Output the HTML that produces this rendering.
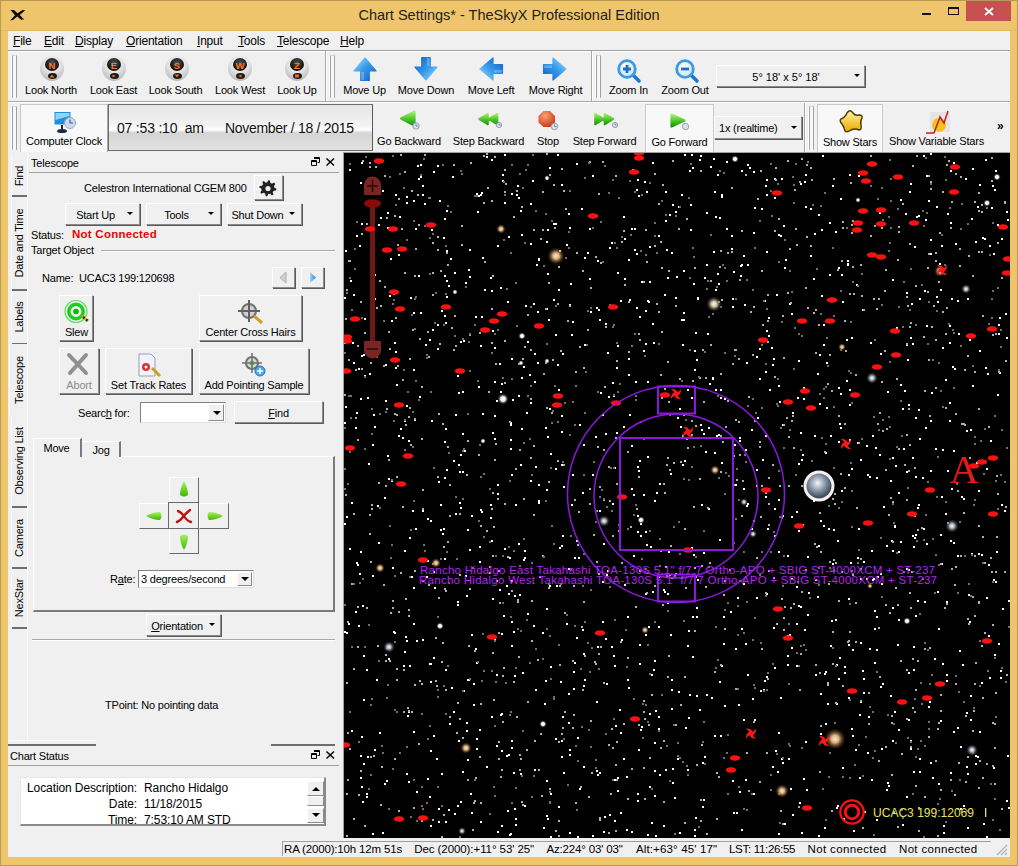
<!DOCTYPE html><html><head><meta charset="utf-8"><style>
*{margin:0;padding:0;box-sizing:border-box}
html,body{width:1018px;height:866px;overflow:hidden;background:#EFC56B;font-family:"Liberation Sans", sans-serif;}
.t{position:absolute;white-space:pre;font-family:"Liberation Sans", sans-serif;letter-spacing:-0.2px;}
.btn{position:absolute;background:#F0F0F0;border-top:1px solid #FFFFFF;border-left:1px solid #FFFFFF;border-right:1px solid #8A8A8A;border-bottom:1px solid #8A8A8A;box-shadow:1px 1px 0 #5A5A5A;}
.sunk{position:absolute;border-top:1px solid #A0A0A0;border-left:1px solid #A0A0A0;border-right:1px solid #FFF;border-bottom:1px solid #FFF;}
.grip{position:absolute;width:5px;border-left:1px solid #A0A0A0;border-right:1px solid #A0A0A0;border-top:1px solid #D8D8D8;border-radius:1px;background:#F8F8F8;}
.grip:before{content:"";position:absolute;left:-2px;top:0;bottom:0;width:1px;background:#FFF;}
.vsep{position:absolute;width:2px;border-left:1px solid #A8A8A8;border-right:1px solid #fff;}
.arr{position:absolute;width:0;height:0;border-left:3px solid transparent;border-right:3px solid transparent;border-top:3px solid #000;}
</style></head><body><div style="position:absolute;left:0;top:0;width:1018px;height:866px;border:1px solid #B89A55;"></div>
<div class="t" style="left:0px;top:7.7px;font-size:14.5px;line-height:14.5px;color:#222;font-weight:normal;width:1018px;text-align:center;letter-spacing:0;">Chart Settings* - TheSkyX Professional Edition</div>
<div style="position:absolute;left:966px;top:1px;width:45px;height:20px;background:#C75050;"></div>
<svg style="position:absolute;left:984px;top:7px" width="10" height="9"><path d="M1 1L9 8M9 1L1 8" stroke="#fff" stroke-width="1.8"/></svg>
<div style="position:absolute;left:948px;top:7px;width:11px;height:8px;border:1px solid #111;border-top-width:2px;"></div>
<div style="position:absolute;left:922px;top:13px;width:9px;height:2px;background:#111;"></div>
<svg style="position:absolute;left:0;top:0" width="30" height="30"><path d="M10.5 10L14 10L17.5 13.2L22.5 10L25.2 10.3L19.8 15L24.2 19.5L21.5 20L17.2 16.6L13 20L10.2 20.4L15 15.2Z" fill="#0A0A10"/><path d="M21.5 19.8L24 19.4L23 18.5Z" fill="#8090D0"/></svg>
<div style="position:absolute;left:1px;top:30px;width:1016px;height:1px;background:#E4B860;"></div>
<div style="position:absolute;left:8px;top:31px;width:1002px;height:826px;background:#F0F0F0;"></div>
<div style="position:absolute;left:8px;top:31px;width:1002px;height:19px;background:#F0F0F0;"></div>
<div style="position:absolute;left:8px;top:50px;width:1002px;height:1px;background:#A0A0A0;"></div>
<div style="position:absolute;left:8px;top:51px;width:1002px;height:1px;background:#FFF;"></div>
<div class="t" style="left:13px;top:34.8px;font-size:12px;line-height:12px;color:#000;font-weight:normal;"><u>F</u>ile</div>
<div class="t" style="left:44px;top:34.8px;font-size:12px;line-height:12px;color:#000;font-weight:normal;"><u>E</u>dit</div>
<div class="t" style="left:75px;top:34.8px;font-size:12px;line-height:12px;color:#000;font-weight:normal;"><u>D</u>isplay</div>
<div class="t" style="left:126px;top:34.8px;font-size:12px;line-height:12px;color:#000;font-weight:normal;"><u>O</u>rientation</div>
<div class="t" style="left:197px;top:34.8px;font-size:12px;line-height:12px;color:#000;font-weight:normal;"><u>I</u>nput</div>
<div class="t" style="left:238px;top:34.8px;font-size:12px;line-height:12px;color:#000;font-weight:normal;"><u>T</u>ools</div>
<div class="t" style="left:277px;top:34.8px;font-size:12px;line-height:12px;color:#000;font-weight:normal;"><u>T</u>elescope</div>
<div class="t" style="left:340px;top:34.8px;font-size:12px;line-height:12px;color:#000;font-weight:normal;"><u>H</u>elp</div>
<div style="position:absolute;left:8px;top:101px;width:1002px;height:1px;background:#A8A8A8;"></div>
<div style="position:absolute;left:8px;top:102px;width:1002px;height:1px;background:#FFF;"></div>
<div class="grip" style="left:12px;top:55px;height:43px"></div>
<div class="vsep" style="left:325px;top:51px;height:50px"></div>
<div class="grip" style="left:330px;top:55px;height:43px"></div>
<div class="vsep" style="left:591px;top:51px;height:50px"></div>
<div class="grip" style="left:596px;top:55px;height:43px"></div>
<div style="position:absolute;left:40px;top:56px;width:24px;height:25px;border-radius:50%;background:radial-gradient(circle at 50% 30%,#FFFFFF 0,#E0E0E0 45%,#A8A8A8 100%);"></div>
<div style="position:absolute;left:45px;top:58px;width:14px;height:13px;border-radius:50%;background:radial-gradient(circle at 50% 35%,#505050 0,#141414 65%);"></div>
<div class="t" style="left:45px;top:60.5px;font-size:9.5px;line-height:9.5px;color:#FF7A20;font-weight:bold;width:14px;text-align:center;letter-spacing:0;">N</div>
<div style="position:absolute;left:47.5px;top:73px;width:9px;height:6px;border-radius:50%;background:#181818;"></div>
<svg style="position:absolute;left:49px;top:74px" width="6" height="4"><path d="M3 0.5L5.5 3.5H0.5Z" fill="#F07020"/></svg>
<div style="position:absolute;left:102px;top:56px;width:24px;height:25px;border-radius:50%;background:radial-gradient(circle at 50% 30%,#FFFFFF 0,#E0E0E0 45%,#A8A8A8 100%);"></div>
<div style="position:absolute;left:107px;top:58px;width:14px;height:13px;border-radius:50%;background:radial-gradient(circle at 50% 35%,#505050 0,#141414 65%);"></div>
<div class="t" style="left:107px;top:60.5px;font-size:9.5px;line-height:9.5px;color:#FF7A20;font-weight:bold;width:14px;text-align:center;letter-spacing:0;">E</div>
<div style="position:absolute;left:109.5px;top:73px;width:9px;height:6px;border-radius:50%;background:#181818;"></div>
<svg style="position:absolute;left:111px;top:74px" width="6" height="4"><path d="M1.5 0.5L5 2L1.5 3.5Z" fill="#F07020"/></svg>
<div style="position:absolute;left:165px;top:56px;width:24px;height:25px;border-radius:50%;background:radial-gradient(circle at 50% 30%,#FFFFFF 0,#E0E0E0 45%,#A8A8A8 100%);"></div>
<div style="position:absolute;left:170px;top:58px;width:14px;height:13px;border-radius:50%;background:radial-gradient(circle at 50% 35%,#505050 0,#141414 65%);"></div>
<div class="t" style="left:170px;top:60.5px;font-size:9.5px;line-height:9.5px;color:#FF7A20;font-weight:bold;width:14px;text-align:center;letter-spacing:0;">S</div>
<div style="position:absolute;left:172.5px;top:73px;width:9px;height:6px;border-radius:50%;background:#181818;"></div>
<svg style="position:absolute;left:174px;top:74px" width="6" height="4"><path d="M0.5 0.5H5.5L3 3.5Z" fill="#F07020"/></svg>
<div style="position:absolute;left:228px;top:56px;width:24px;height:25px;border-radius:50%;background:radial-gradient(circle at 50% 30%,#FFFFFF 0,#E0E0E0 45%,#A8A8A8 100%);"></div>
<div style="position:absolute;left:233px;top:58px;width:14px;height:13px;border-radius:50%;background:radial-gradient(circle at 50% 35%,#505050 0,#141414 65%);"></div>
<div class="t" style="left:233px;top:60.5px;font-size:9.5px;line-height:9.5px;color:#FF7A20;font-weight:bold;width:14px;text-align:center;letter-spacing:0;">W</div>
<div style="position:absolute;left:235.5px;top:73px;width:9px;height:6px;border-radius:50%;background:#181818;"></div>
<svg style="position:absolute;left:237px;top:74px" width="6" height="4"><path d="M4.5 0.5L1 2L4.5 3.5Z" fill="#F07020"/></svg>
<div style="position:absolute;left:285px;top:56px;width:24px;height:25px;border-radius:50%;background:radial-gradient(circle at 50% 30%,#FFFFFF 0,#E0E0E0 45%,#A8A8A8 100%);"></div>
<div style="position:absolute;left:290px;top:58px;width:14px;height:13px;border-radius:50%;background:radial-gradient(circle at 50% 35%,#505050 0,#141414 65%);"></div>
<div class="t" style="left:290px;top:60.5px;font-size:9.5px;line-height:9.5px;color:#FF7A20;font-weight:bold;width:14px;text-align:center;letter-spacing:0;">Z</div>
<div style="position:absolute;left:292.5px;top:73px;width:9px;height:6px;border-radius:50%;background:#181818;"></div>
<svg style="position:absolute;left:294px;top:74px" width="6" height="4"><path d="M1 0.5H5V3.5H1Z" fill="#F07020"/></svg>
<div class="t" style="left:22px;top:84.7px;font-size:11px;line-height:11px;color:#000;font-weight:normal;width:58px;text-align:center;">Look North</div>
<div class="t" style="left:87px;top:84.7px;font-size:11px;line-height:11px;color:#000;font-weight:normal;width:53px;text-align:center;">Look East</div>
<div class="t" style="left:146px;top:84.7px;font-size:11px;line-height:11px;color:#000;font-weight:normal;width:59px;text-align:center;">Look South</div>
<div class="t" style="left:212px;top:84.7px;font-size:11px;line-height:11px;color:#000;font-weight:normal;width:56px;text-align:center;">Look West</div>
<div class="t" style="left:275px;top:84.7px;font-size:11px;line-height:11px;color:#000;font-weight:normal;width:44px;text-align:center;">Look Up</div>
<svg style="position:absolute;left:352px;top:56px;transform:rotate(0deg)" width="26" height="26" viewBox="0 0 26 26"><defs><linearGradient id="ag365" x1="0" y1="0" x2="1" y2="1"><stop offset="0" stop-color="#A0E0FF"/><stop offset="0.45" stop-color="#3A9CEC"/><stop offset="1" stop-color="#0E5EC0"/></linearGradient></defs><path d="M13 2L24 15H17.3V24.5H8.7V15H2Z" fill="url(#ag365)" stroke="url(#ag365)" stroke-width="1.2" stroke-linejoin="round"/><path d="M9.5 16H12V24H9.5Z" fill="#FFFFFF" opacity="0.25"/></svg>
<svg style="position:absolute;left:413px;top:56px;transform:rotate(180deg)" width="26" height="26" viewBox="0 0 26 26"><defs><linearGradient id="ag426" x1="0" y1="0" x2="1" y2="1"><stop offset="0" stop-color="#A0E0FF"/><stop offset="0.45" stop-color="#3A9CEC"/><stop offset="1" stop-color="#0E5EC0"/></linearGradient></defs><path d="M13 2L24 15H17.3V24.5H8.7V15H2Z" fill="url(#ag426)" stroke="url(#ag426)" stroke-width="1.2" stroke-linejoin="round"/><path d="M9.5 16H12V24H9.5Z" fill="#FFFFFF" opacity="0.25"/></svg>
<svg style="position:absolute;left:478px;top:56px;transform:rotate(-90deg)" width="26" height="26" viewBox="0 0 26 26"><defs><linearGradient id="ag491" x1="0" y1="0" x2="1" y2="1"><stop offset="0" stop-color="#A0E0FF"/><stop offset="0.45" stop-color="#3A9CEC"/><stop offset="1" stop-color="#0E5EC0"/></linearGradient></defs><path d="M13 2L24 15H17.3V24.5H8.7V15H2Z" fill="url(#ag491)" stroke="url(#ag491)" stroke-width="1.2" stroke-linejoin="round"/><path d="M9.5 16H12V24H9.5Z" fill="#FFFFFF" opacity="0.25"/></svg>
<svg style="position:absolute;left:542px;top:56px;transform:rotate(90deg)" width="26" height="26" viewBox="0 0 26 26"><defs><linearGradient id="ag555" x1="0" y1="0" x2="1" y2="1"><stop offset="0" stop-color="#A0E0FF"/><stop offset="0.45" stop-color="#3A9CEC"/><stop offset="1" stop-color="#0E5EC0"/></linearGradient></defs><path d="M13 2L24 15H17.3V24.5H8.7V15H2Z" fill="url(#ag555)" stroke="url(#ag555)" stroke-width="1.2" stroke-linejoin="round"/><path d="M9.5 16H12V24H9.5Z" fill="#FFFFFF" opacity="0.25"/></svg>
<div class="t" style="left:340px;top:84.7px;font-size:11px;line-height:11px;color:#000;font-weight:normal;width:49px;text-align:center;">Move Up</div>
<div class="t" style="left:395px;top:84.7px;font-size:11px;line-height:11px;color:#000;font-weight:normal;width:62px;text-align:center;">Move Down</div>
<div class="t" style="left:464px;top:84.7px;font-size:11px;line-height:11px;color:#000;font-weight:normal;width:54px;text-align:center;">Move Left</div>
<div class="t" style="left:525px;top:84.7px;font-size:11px;line-height:11px;color:#000;font-weight:normal;width:61px;text-align:center;">Move Right</div>
<svg style="position:absolute;left:613px;top:56px" width="30" height="28" viewBox="0 0 30 28"><defs><radialGradient id="zl627" cx="0.4" cy="0.35" r="0.7"><stop offset="0" stop-color="#FFFFFF"/><stop offset="1" stop-color="#C8E4F8"/></radialGradient></defs><path d="M19.5 18.5L26 25" stroke="#1A78D0" stroke-width="3.6" stroke-linecap="round"/><circle cx="14" cy="13" r="8.3" fill="url(#zl627)" stroke="#3A9AE8" stroke-width="2.8"/><path d="M10 13H18M14 9V17" stroke="#1A70C8" stroke-width="2.8"/></svg>
<svg style="position:absolute;left:671px;top:56px" width="30" height="28" viewBox="0 0 30 28"><defs><radialGradient id="zl685" cx="0.4" cy="0.35" r="0.7"><stop offset="0" stop-color="#FFFFFF"/><stop offset="1" stop-color="#C8E4F8"/></radialGradient></defs><path d="M19.5 18.5L26 25" stroke="#1A78D0" stroke-width="3.6" stroke-linecap="round"/><circle cx="14" cy="13" r="8.3" fill="url(#zl685)" stroke="#3A9AE8" stroke-width="2.8"/><path d="M10 13H18" stroke="#1A70C8" stroke-width="2.8"/></svg>
<div class="t" style="left:606px;top:84.7px;font-size:11px;line-height:11px;color:#000;font-weight:normal;width:45px;text-align:center;">Zoom In</div>
<div class="t" style="left:659px;top:84.7px;font-size:11px;line-height:11px;color:#000;font-weight:normal;width:52px;text-align:center;">Zoom Out</div>
<div class="btn" style="left:716px;top:65px;width:149px;height:22px;"></div>
<div class="t" style="left:716px;top:71.7px;font-size:11px;line-height:11px;color:#000;font-weight:normal;width:140px;text-align:center;letter-spacing:0;">5° 18' x 5° 18'</div>
<div class="arr" style="left:854px;top:74px"></div>
<div class="grip" style="left:12px;top:106px;height:44px"></div>
<div style="position:absolute;left:20px;top:104px;width:88px;height:48px;background:#F8F8F8;border:1px solid #C8C8C8;border-bottom:none;border-right:1px solid #A8A8A8;"></div>
<svg style="position:absolute;left:53px;top:109px" width="26" height="26" viewBox="0 0 26 26"><path d="M1.5 3L17.5 3V15.5L1.5 15.5Z" fill="#1A90E0"/><path d="M2.5 4L16.5 4V7L2.5 11Z" fill="#90D4FA"/><rect x="8" y="16" width="2" height="5" fill="#222"/><ellipse cx="9" cy="22" rx="5" ry="2" fill="#1a2a4a"/><circle cx="17" cy="14" r="5.5" fill="#D0DAE8" stroke="#98A8C0"/><path d="M17 10.5V14H20" stroke="#3060B0" fill="none" stroke-width="1.2"/></svg>
<div class="t" style="left:20px;top:135.7px;font-size:11px;line-height:11px;color:#000;font-weight:normal;width:88px;text-align:center;">Computer Clock</div>
<div style="position:absolute;left:108px;top:104px;width:265px;height:47px;background:linear-gradient(#E6E6E6 0%,#F2F2F2 45%,#FFFFFF 55%,#D4D4D4 62%,#E2E2E2 100%);border:1px solid #6E6E6E;border-right-color:#5A5A5A;"></div>
<div class="t" style="left:117px;top:121.1px;font-size:14px;line-height:14px;color:#111;font-weight:normal;">07 :53 :10  am</div>
<div class="t" style="left:225px;top:121.1px;font-size:14px;line-height:14px;color:#111;font-weight:normal;letter-spacing:-0.3px;">November / 18 / 2015</div>
<svg style="position:absolute;left:0;top:0" width="1018" height="160"><defs><linearGradient id="gmg" x1="0" y1="0" x2="0" y2="1"><stop offset="0" stop-color="#A8F070"/><stop offset="0.6" stop-color="#40C020"/><stop offset="1" stop-color="#209010"/></linearGradient><radialGradient id="gstop" cx="0.4" cy="0.3" r="0.8"><stop offset="0" stop-color="#F8A070"/><stop offset="1" stop-color="#C83010"/></radialGradient></defs><path d="M401 118.5L414.5 111.5V125.5Z" fill="url(#gmg)" stroke="url(#gmg)" stroke-width="2.2" stroke-linejoin="round"/><circle cx="416" cy="126" r="3.2" fill="#D8E0EA" stroke="#8898B0" stroke-width="0.9"/><path d="M416 124.0V126H418.2" stroke="#506080" stroke-width="0.6" fill="none"/><path d="M479 119L488 113.5V124.5Z M488.5 119L497.5 113.5V124.5Z" fill="url(#gmg)" stroke="url(#gmg)" stroke-width="1.6" stroke-linejoin="round"/><circle cx="499" cy="125" r="2.6" fill="#D8E0EA" stroke="#8898B0" stroke-width="0.9"/><path d="M499 123.60000000000001V125H500.6" stroke="#506080" stroke-width="0.6" fill="none"/><path d="M543.5 111H550L555 116V122.5L550 127H543.5L538.5 122.5V116Z" fill="url(#gstop)"/><circle cx="554.5" cy="126.5" r="3.2" fill="#D8E0EA" stroke="#8898B0" stroke-width="0.9"/><path d="M554.5 124.5V126.5H556.7" stroke="#506080" stroke-width="0.6" fill="none"/><path d="M595 113.5L604 119L595 124.5Z M604.5 113.5L613.5 119L604.5 124.5Z" fill="url(#gmg)" stroke="url(#gmg)" stroke-width="1.6" stroke-linejoin="round"/><circle cx="615" cy="125" r="2.6" fill="#D8E0EA" stroke="#8898B0" stroke-width="0.9"/><path d="M615 123.60000000000001V125H616.6" stroke="#506080" stroke-width="0.6" fill="none"/></svg>
<div style="position:absolute;left:645px;top:104px;width:69px;height:48px;background:#F8F8F8;border:1px solid #C8C8C8;border-bottom:none;"></div>
<svg style="position:absolute;left:0;top:0" width="1018" height="160"><path d="M671.5 114.5L684.5 120.5L671.5 126.5Z" fill="url(#gmg)" stroke="url(#gmg)" stroke-width="2.2" stroke-linejoin="round"/><circle cx="685.5" cy="126.5" r="3.2" fill="#D8E0EA" stroke="#8898B0" stroke-width="0.9"/></svg>
<div class="t" style="left:374px;top:135.7px;font-size:11px;line-height:11px;color:#000;font-weight:normal;width:70px;text-align:center;">Go Backward</div>
<div class="t" style="left:449px;top:135.7px;font-size:11px;line-height:11px;color:#000;font-weight:normal;width:79px;text-align:center;">Step Backward</div>
<div class="t" style="left:533px;top:135.7px;font-size:11px;line-height:11px;color:#000;font-weight:normal;width:30px;text-align:center;">Stop</div>
<div class="t" style="left:568px;top:135.7px;font-size:11px;line-height:11px;color:#000;font-weight:normal;width:73px;text-align:center;">Step Forward</div>
<div class="t" style="left:645px;top:136.7px;font-size:11px;line-height:11px;color:#000;font-weight:normal;width:69px;text-align:center;">Go Forward</div>
<div class="btn" style="left:714px;top:116px;width:88px;height:23px;"></div>
<div class="t" style="left:719px;top:122.7px;font-size:11px;line-height:11px;color:#000;font-weight:normal;">1x (realtime)</div>
<div class="arr" style="left:791px;top:126px"></div>
<div class="vsep" style="left:804px;top:103px;height:49px"></div>
<div class="grip" style="left:809px;top:106px;height:44px"></div>
<div style="position:absolute;left:817px;top:104px;width:66px;height:48px;background:#F8F8F8;border:1px solid #C8C8C8;border-bottom:none;"></div>
<svg style="position:absolute;left:838px;top:109px" width="27" height="26" viewBox="0 0 27 26"><defs><linearGradient id="gst" x1="0" y1="0" x2="0" y2="1"><stop offset="0" stop-color="#FFF4A0"/><stop offset="1" stop-color="#E8A800"/></linearGradient></defs><path d="M11 2Q13 1 15 4Q17 7 21 6Q25 6 24 9Q22 12 23 16Q24 21 21 21Q17 19 13 21Q9 24 7 22Q6 18 4 15Q1 12 3 10Q6 9 8 6Q9 3 11 2Z" fill="url(#gst)" stroke="#4A3A00" stroke-width="1.4"/></svg>
<div class="t" style="left:817px;top:136.7px;font-size:11px;line-height:11px;color:#000;font-weight:normal;width:66px;text-align:center;">Show Stars</div>
<svg style="position:absolute;left:924px;top:109px" width="28" height="26" viewBox="0 0 28 26"><rect x="6" y="3" width="20" height="20" fill="#E4E4E4"/><circle cx="15" cy="16" r="7" fill="#F8C020"/><path d="M2 24H10L16 8L20 14L24 2" stroke="#C02020" stroke-width="1.5" fill="none"/></svg>
<div class="t" style="left:889px;top:135.7px;font-size:11px;line-height:11px;color:#000;font-weight:normal;width:95px;text-align:center;">Show Variable Stars</div>
<div class="t" style="left:997px;top:119.8px;font-size:12px;line-height:12px;color:#000;font-weight:bold;">»</div>
<div style="position:absolute;left:343px;top:152px;width:667px;height:686px;background:#000;border-left:1px solid #A0A0A0;border-top:1px solid #A0A0A0;"></div>
<svg style="position:absolute;left:344px;top:153px" width="666" height="685" viewBox="0 0 666 685"><filter id="bl" x="0" y="0" width="1" height="1"><feGaussianBlur stdDeviation="0.45"/></filter><g filter="url(#bl)"><path fill="#FFFFFF" d="M276 579h2v2h-2zM626 566h2v2h-2zM194 349h2v2h-2zM469 347h2v2h-2zM522 425h2v2h-2zM167 594h2v2h-2zM101 668h2v2h-2zM337 41h2v2h-2zM568 190h2v2h-2zM308 9h2v2h-2zM160 395h2v2h-2zM563 206h2v2h-2zM122 569h2v2h-2zM343 236h2v2h-2zM166 295h2v2h-2zM471 426h2v2h-2zM188 27h2v2h-2zM180 404h2v2h-2zM332 123h2v2h-2zM543 238h2v2h-2zM548 587h2v2h-2zM69 159h2v2h-2zM650 36h2v2h-2zM454 377h2v2h-2zM459 625h2v2h-2zM504 491h2v2h-2zM456 30h2v2h-2zM640 85h2v2h-2zM502 186h2v2h-2zM377 41h2v2h-2zM164 83h2v2h-2zM313 237h2v2h-2zM205 14h2v2h-2zM349 401h2v2h-2zM41 247h2v2h-2zM152 592h2v2h-2zM583 545h2v2h-2zM419 536h2v2h-2zM167 468h2v2h-2zM326 481h2v2h-2zM326 320h2v2h-2zM305 128h2v2h-2zM497 121h2v2h-2zM337 166h2v2h-2zM655 219h2v2h-2zM125 96h2v2h-2zM230 509h2v2h-2zM457 679h2v2h-2zM376 244h2v2h-2zM335 255h2v2h-2zM434 579h2v2h-2zM528 282h2v2h-2zM206 640h2v2h-2zM407 375h2v2h-2zM574 256h2v2h-2zM5 16h2v2h-2zM596 136h2v2h-2zM522 292h2v2h-2zM162 432h2v2h-2zM100 122h2v2h-2zM235 635h2v2h-2zM276 147h2v2h-2zM323 440h2v2h-2zM305 560h2v2h-2zM376 236h2v2h-2zM348 503h2v2h-2zM327 99h2v2h-2zM125 396h2v2h-2zM1 97h2v2h-2zM586 317h2v2h-2zM602 448h2v2h-2zM323 241h2v2h-2zM512 131h2v2h-2zM201 274h2v2h-2zM261 367h2v2h-2zM45 142h2v2h-2zM147 387h2v2h-2zM430 25h2v2h-2zM503 107h2v2h-2zM76 159h2v2h-2zM350 216h2v2h-2zM554 339h2v2h-2zM339 166h2v2h-2zM135 393h2v2h-2zM150 262h2v2h-2zM258 261h2v2h-2zM410 566h2v2h-2zM413 264h2v2h-2zM536 533h2v2h-2zM180 652h2v2h-2zM150 285h2v2h-2zM218 382h2v2h-2zM225 601h2v2h-2zM178 519h2v2h-2zM596 567h2v2h-2zM104 132h2v2h-2zM60 267h2v2h-2zM102 316h2v2h-2zM71 75h2v2h-2zM159 462h2v2h-2zM480 674h2v2h-2zM420 147h2v2h-2zM365 230h2v2h-2zM14 472h2v2h-2zM489 376h2v2h-2zM437 25h2v2h-2zM174 390h2v2h-2zM430 514h2v2h-2zM399 430h2v2h-2zM417 55h2v2h-2zM99 375h2v2h-2zM558 671h2v2h-2zM530 457h2v2h-2zM134 42h2v2h-2zM580 448h2v2h-2zM325 421h2v2h-2zM434 81h2v2h-2zM585 548h2v2h-2zM275 556h2v2h-2zM346 76h2v2h-2zM461 588h2v2h-2zM470 327h2v2h-2zM416 537h2v2h-2zM248 682h2v2h-2zM662 184h2v2h-2zM478 2h2v2h-2zM477 142h2v2h-2zM628 232h2v2h-2zM100 162h2v2h-2zM125 123h2v2h-2zM215 394h2v2h-2zM202 455h2v2h-2zM163 657h2v2h-2zM127 659h2v2h-2zM248 22h2v2h-2zM370 299h2v2h-2zM94 328h2v2h-2zM16 602h2v2h-2zM140 136h2v2h-2zM198 479h2v2h-2zM656 524h2v2h-2zM320 438h2v2h-2zM111 261h2v2h-2zM137 163h2v2h-2zM86 367h2v2h-2zM167 321h2v2h-2zM74 25h2v2h-2zM466 102h2v2h-2zM203 283h2v2h-2zM30 273h2v2h-2zM641 6h2v2h-2zM525 495h2v2h-2zM104 656h2v2h-2zM353 426h2v2h-2zM19 201h2v2h-2zM340 307h2v2h-2zM186 50h2v2h-2zM403 11h2v2h-2zM290 75h2v2h-2zM1 253h2v2h-2zM75 243h2v2h-2zM475 201h2v2h-2zM212 432h2v2h-2zM475 250h2v2h-2zM375 528h2v2h-2zM613 402h2v2h-2zM645 92h2v2h-2zM339 117h2v2h-2zM283 526h2v2h-2zM267 89h2v2h-2zM263 417h2v2h-2zM546 542h2v2h-2zM295 163h2v2h-2zM605 172h2v2h-2zM373 120h2v2h-2zM362 59h2v2h-2zM649 614h2v2h-2zM508 496h2v2h-2zM310 617h2v2h-2zM548 304h2v2h-2zM129 551h2v2h-2zM526 189h2v2h-2zM302 391h2v2h-2zM314 473h2v2h-2zM261 485h2v2h-2zM8 189h2v2h-2zM447 425h2v2h-2zM482 209h2v2h-2zM273 624h2v2h-2zM642 683h2v2h-2zM353 145h2v2h-2zM118 318h2v2h-2zM568 382h2v2h-2zM564 519h2v2h-2zM214 236h2v2h-2zM153 331h2v2h-2zM436 544h2v2h-2zM51 198h2v2h-2zM167 492h2v2h-2zM586 609h2v2h-2zM48 414h2v2h-2zM268 350h2v2h-2zM225 679h2v2h-2zM371 152h2v2h-2zM166 286h2v2h-2zM150 228h2v2h-2zM16 29h2v2h-2zM421 282h2v2h-2zM76 11h2v2h-2zM156 561h2v2h-2zM206 683h2v2h-2zM452 470h2v2h-2zM327 555h2v2h-2zM153 340h2v2h-2zM430 44h2v2h-2zM303 681h2v2h-2zM516 425h2v2h-2zM7 577h2v2h-2zM323 124h2v2h-2zM189 150h2v2h-2zM142 3h2v2h-2zM289 402h2v2h-2zM219 619h2v2h-2zM301 157h2v2h-2zM346 51h2v2h-2zM460 332h2v2h-2zM566 595h2v2h-2zM491 78h2v2h-2zM498 148h2v2h-2zM422 41h2v2h-2zM118 280h2v2h-2zM608 213h2v2h-2zM202 336h2v2h-2zM267 493h2v2h-2zM480 520h2v2h-2zM452 433h2v2h-2zM234 404h2v2h-2zM279 605h2v2h-2zM76 23h2v2h-2zM611 90h2v2h-2zM400 151h2v2h-2zM603 317h2v2h-2zM114 239h2v2h-2zM573 447h2v2h-2zM435 248h2v2h-2zM292 154h2v2h-2zM443 502h2v2h-2zM459 245h2v2h-2zM114 587h2v2h-2zM532 324h2v2h-2zM119 537h2v2h-2zM584 553h2v2h-2zM364 274h2v2h-2zM12 82h2v2h-2zM269 502h2v2h-2zM532 496h2v2h-2zM263 199h2v2h-2zM135 408h2v2h-2zM240 104h2v2h-2zM321 413h2v2h-2zM662 647h2v2h-2zM214 653h2v2h-2zM193 209h2v2h-2zM628 15h2v2h-2zM83 625h2v2h-2zM360 603h2v2h-2zM644 411h2v2h-2zM153 678h2v2h-2zM642 315h2v2h-2zM140 176h2v2h-2zM292 100h2v2h-2zM109 307h2v2h-2zM295 307h2v2h-2zM338 311h2v2h-2zM410 54h2v2h-2zM504 321h2v2h-2zM176 311h2v2h-2zM664 447h2v2h-2zM295 510h2v2h-2zM351 664h2v2h-2zM474 61h2v2h-2zM303 228h2v2h-2zM69 216h2v2h-2zM507 184h2v2h-2zM206 300h2v2h-2zM362 111h2v2h-2zM300 28h2v2h-2zM351 179h2v2h-2zM352 542h2v2h-2zM391 495h2v2h-2zM571 264h2v2h-2zM217 31h2v2h-2zM516 306h2v2h-2zM628 212h2v2h-2zM580 137h2v2h-2zM186 90h2v2h-2zM49 478h2v2h-2zM287 678h2v2h-2zM62 487h2v2h-2zM654 490h2v2h-2zM476 540h2v2h-2zM330 644h2v2h-2zM301 190h2v2h-2zM177 81h2v2h-2zM135 576h2v2h-2zM395 284h2v2h-2zM438 362h2v2h-2zM233 584h2v2h-2zM43 59h2v2h-2zM523 321h2v2h-2zM132 509h2v2h-2zM93 171h2v2h-2zM105 570h2v2h-2zM218 563h2v2h-2zM17 633h2v2h-2zM16 245h2v2h-2zM454 310h2v2h-2zM382 8h2v2h-2zM282 623h2v2h-2zM421 218h2v2h-2zM511 596h2v2h-2zM527 626h2v2h-2zM50 479h2v2h-2zM299 197h2v2h-2zM22 640h2v2h-2zM294 42h2v2h-2zM347 244h2v2h-2zM586 86h2v2h-2zM599 679h2v2h-2zM550 372h2v2h-2zM157 672h2v2h-2zM261 280h2v2h-2zM123 376h2v2h-2zM230 404h2v2h-2zM113 451h2v2h-2zM297 128h2v2h-2zM136 41h2v2h-2zM4 470h2v2h-2zM64 287h2v2h-2zM183 460h2v2h-2zM399 102h2v2h-2zM215 97h2v2h-2zM61 483h2v2h-2zM649 100h2v2h-2zM2 363h2v2h-2zM479 372h2v2h-2zM325 61h2v2h-2zM284 106h2v2h-2zM0 478h2v2h-2zM539 353h2v2h-2zM397 676h2v2h-2zM609 389h2v2h-2zM609 9h2v2h-2zM209 70h2v2h-2zM260 663h2v2h-2zM460 28h2v2h-2zM171 665h2v2h-2zM618 511h2v2h-2zM190 228h2v2h-2zM434 232h2v2h-2zM34 71h2v2h-2zM513 289h2v2h-2zM609 297h2v2h-2zM273 119h2v2h-2zM86 510h2v2h-2zM219 333h2v2h-2zM194 106h2v2h-2zM524 10h2v2h-2zM63 562h2v2h-2zM222 91h2v2h-2zM401 296h2v2h-2zM336 273h2v2h-2zM494 288h2v2h-2zM44 325h2v2h-2zM167 40h2v2h-2zM109 558h2v2h-2zM452 512h2v2h-2zM374 281h2v2h-2zM631 610h2v2h-2zM586 267h2v2h-2zM595 110h2v2h-2zM17 9h2v2h-2zM38 679h2v2h-2zM516 489h2v2h-2zM81 191h2v2h-2zM54 101h2v2h-2zM229 518h2v2h-2zM515 561h2v2h-2zM389 118h2v2h-2zM562 643h2v2h-2zM156 134h2v2h-2zM497 337h2v2h-2zM0 269h2v2h-2zM126 640h2v2h-2zM239 532h2v2h-2zM47 327h2v2h-2zM217 392h2v2h-2zM487 467h2v2h-2zM148 279h2v2h-2zM270 512h2v2h-2zM392 659h2v2h-2zM111 360h2v2h-2zM294 317h2v2h-2zM150 194h2v2h-2zM390 291h2v2h-2zM166 269h2v2h-2zM294 596h2v2h-2zM622 277h2v2h-2zM23 244h2v2h-2zM434 346h2v2h-2zM481 299h2v2h-2zM11 274h2v2h-2zM663 66h2v2h-2zM133 58h2v2h-2zM479 171h2v2h-2zM271 572h2v2h-2zM35 579h2v2h-2zM547 387h2v2h-2zM564 566h2v2h-2zM328 629h2v2h-2zM452 358h2v2h-2zM167 205h2v2h-2zM569 516h2v2h-2zM106 105h2v2h-2zM569 493h2v2h-2zM645 524h2v2h-2zM176 620h2v2h-2zM443 511h2v2h-2zM561 60h2v2h-2zM439 72h2v2h-2zM496 45h2v2h-2zM214 103h2v2h-2zM542 636h2v2h-2zM22 516h2v2h-2zM458 371h2v2h-2zM513 404h2v2h-2zM32 526h2v2h-2zM582 172h2v2h-2zM96 376h2v2h-2zM217 587h2v2h-2zM466 55h2v2h-2zM217 311h2v2h-2zM606 387h2v2h-2zM548 397h2v2h-2zM619 345h2v2h-2zM344 564h2v2h-2zM486 282h2v2h-2zM228 321h2v2h-2zM641 214h2v2h-2zM291 228h2v2h-2zM186 327h2v2h-2zM171 351h2v2h-2zM114 311h2v2h-2zM124 116h2v2h-2zM463 403h2v2h-2zM252 548h2v2h-2zM9 141h2v2h-2zM457 182h2v2h-2zM613 147h2v2h-2zM423 375h2v2h-2zM127 362h2v2h-2zM331 144h2v2h-2zM287 335h2v2h-2zM628 595h2v2h-2zM556 388h2v2h-2zM25 220h2v2h-2zM662 58h2v2h-2zM355 6h2v2h-2zM554 398h2v2h-2zM152 521h2v2h-2zM397 475h2v2h-2zM292 36h2v2h-2zM372 282h2v2h-2zM40 630h2v2h-2zM87 76h2v2h-2zM202 88h2v2h-2zM503 110h2v2h-2zM259 678h2v2h-2zM397 17h2v2h-2zM386 458h2v2h-2zM270 314h2v2h-2zM461 21h2v2h-2zM359 280h2v2h-2zM279 63h2v2h-2zM86 597h2v2h-2zM232 387h2v2h-2zM262 530h2v2h-2zM516 548h2v2h-2zM635 578h2v2h-2zM338 191h2v2h-2zM138 260h2v2h-2zM437 605h2v2h-2zM28 422h2v2h-2zM579 375h2v2h-2zM422 177h2v2h-2zM312 339h2v2h-2zM503 111h2v2h-2zM202 155h2v2h-2zM495 504h2v2h-2zM29 261h2v2h-2zM170 442h2v2h-2zM0 370h2v2h-2zM238 476h2v2h-2zM25 75h2v2h-2zM78 41h2v2h-2zM301 440h2v2h-2zM20 165h2v2h-2zM597 410h2v2h-2zM403 350h2v2h-2zM287 292h2v2h-2zM581 66h2v2h-2zM601 226h2v2h-2zM371 236h2v2h-2zM505 286h2v2h-2zM496 274h2v2h-2zM166 271h2v2h-2zM328 615h2v2h-2zM158 21h2v2h-2zM538 530h2v2h-2zM264 243h2v2h-2zM235 271h2v2h-2zM352 454h2v2h-2zM507 315h2v2h-2zM599 672h2v2h-2zM356 2h2v2h-2zM661 160h2v2h-2zM564 416h2v2h-2zM592 53h2v2h-2zM191 313h2v2h-2zM464 439h2v2h-2zM523 599h2v2h-2zM42 627h2v2h-2zM155 210h2v2h-2zM571 323h2v2h-2zM314 82h2v2h-2zM170 522h2v2h-2zM348 463h2v2h-2zM226 130h2v2h-2zM438 271h2v2h-2zM183 188h2v2h-2zM280 85h2v2h-2zM255 357h2v2h-2zM62 252h2v2h-2zM644 482h2v2h-2zM518 156h2v2h-2zM147 137h2v2h-2zM168 246h2v2h-2zM285 261h2v2h-2zM343 492h2v2h-2zM575 145h2v2h-2zM579 2h2v2h-2zM270 626h2v2h-2zM52 231h2v2h-2zM476 367h2v2h-2zM237 55h2v2h-2zM607 335h2v2h-2zM92 605h2v2h-2zM224 60h2v2h-2zM214 136h2v2h-2zM654 171h2v2h-2zM648 305h2v2h-2zM71 375h2v2h-2zM315 330h2v2h-2zM469 125h2v2h-2zM633 603h2v2h-2zM69 434h2v2h-2zM367 544h2v2h-2zM627 400h2v2h-2zM123 526h2v2h-2zM470 282h2v2h-2zM17 70h2v2h-2zM474 682h2v2h-2zM217 603h2v2h-2zM488 32h2v2h-2zM632 309h2v2h-2zM657 351h2v2h-2zM176 57h2v2h-2zM401 490h2v2h-2zM72 487h2v2h-2zM211 315h2v2h-2zM616 593h2v2h-2zM78 486h2v2h-2zM515 624h2v2h-2zM191 536h2v2h-2zM430 382h2v2h-2zM327 526h2v2h-2zM93 12h2v2h-2zM121 422h2v2h-2zM333 264h2v2h-2zM364 355h2v2h-2zM46 105h2v2h-2zM642 444h2v2h-2zM345 17h2v2h-2zM496 240h2v2h-2zM655 164h2v2h-2zM100 288h2v2h-2zM500 513h2v2h-2zM447 363h2v2h-2zM304 148h2v2h-2zM206 513h2v2h-2zM238 339h2v2h-2zM388 153h2v2h-2zM30 596h2v2h-2zM463 461h2v2h-2zM85 186h2v2h-2zM203 665h2v2h-2zM283 463h2v2h-2zM653 241h2v2h-2zM315 621h2v2h-2zM347 394h2v2h-2zM616 655h2v2h-2zM566 184h2v2h-2zM456 453h2v2h-2zM483 550h2v2h-2zM396 112h2v2h-2zM366 13h2v2h-2zM134 233h2v2h-2zM290 96h2v2h-2zM359 646h2v2h-2zM16 398h2v2h-2zM24 310h2v2h-2zM622 559h2v2h-2zM368 224h2v2h-2zM554 576h2v2h-2zM0 144h2v2h-2zM239 500h2v2h-2zM387 82h2v2h-2zM269 242h2v2h-2zM578 324h2v2h-2zM434 680h2v2h-2zM532 463h2v2h-2zM421 343h2v2h-2zM625 186h2v2h-2zM284 534h2v2h-2zM350 676h2v2h-2zM218 200h2v2h-2zM362 541h2v2h-2zM485 69h2v2h-2zM60 498h2v2h-2zM245 75h2v2h-2zM542 392h2v2h-2zM344 477h2v2h-2zM246 158h2v2h-2zM295 491h2v2h-2zM360 124h2v2h-2zM108 23h2v2h-2zM113 448h2v2h-2zM660 357h2v2h-2zM89 582h2v2h-2zM448 661h2v2h-2zM369 98h2v2h-2zM358 609h2v2h-2zM479 191h2v2h-2zM546 327h2v2h-2zM146 364h2v2h-2zM646 287h2v2h-2zM293 362h2v2h-2zM239 291h2v2h-2zM43 74h2v2h-2zM605 267h2v2h-2zM405 14h2v2h-2zM663 602h2v2h-2zM327 424h2v2h-2zM477 76h2v2h-2zM310 589h2v2h-2zM440 670h2v2h-2zM558 255h2v2h-2zM455 649h2v2h-2zM601 360h2v2h-2zM624 441h2v2h-2zM157 597h2v2h-2zM309 516h2v2h-2zM323 449h2v2h-2zM373 21h2v2h-2zM173 32h2v2h-2zM566 30h2v2h-2zM524 563h2v2h-2zM229 535h2v2h-2zM586 100h2v2h-2zM100 405h2v2h-2zM270 667h2v2h-2zM412 203h2v2h-2zM402 352h2v2h-2zM251 283h2v2h-2zM397 111h2v2h-2zM453 244h2v2h-2zM532 666h2v2h-2zM124 526h2v2h-2zM258 468h2v2h-2zM571 462h2v2h-2zM635 197h2v2h-2zM132 585h2v2h-2zM129 530h2v2h-2zM443 482h2v2h-2zM473 220h2v2h-2zM396 122h2v2h-2zM255 619h2v2h-2zM50 189h2v2h-2zM427 194h2v2h-2zM95 47h2v2h-2zM537 595h2v2h-2zM433 618h2v2h-2zM531 294h2v2h-2zM502 227h2v2h-2zM350 682h2v2h-2zM498 614h2v2h-2zM181 152h2v2h-2zM193 158h2v2h-2zM310 347h2v2h-2zM137 358h2v2h-2zM289 341h2v2h-2zM440 114h2v2h-2zM252 154h2v2h-2zM194 347h2v2h-2zM562 191h2v2h-2zM14 215h2v2h-2zM202 662h2v2h-2zM505 251h2v2h-2zM422 26h2v2h-2zM131 495h2v2h-2zM153 92h2v2h-2zM261 170h2v2h-2zM454 207h2v2h-2zM391 331h2v2h-2zM363 180h2v2h-2zM98 380h2v2h-2zM562 318h2v2h-2zM634 400h2v2h-2zM607 145h2v2h-2zM87 267h2v2h-2zM594 475h2v2h-2zM379 463h2v2h-2zM41 211h2v2h-2zM51 41h2v2h-2zM265 661h2v2h-2zM78 32h2v2h-2zM320 141h2v2h-2zM597 343h2v2h-2zM97 620h2v2h-2zM573 354h2v2h-2zM333 605h2v2h-2zM340 1h2v2h-2zM597 92h2v2h-2zM610 215h2v2h-2zM377 43h2v2h-2zM245 125h2v2h-2zM582 390h2v2h-2zM481 518h2v2h-2zM586 0h2v2h-2zM74 122h2v2h-2zM594 630h2v2h-2zM30 121h2v2h-2zM15 92h2v2h-2zM305 633h2v2h-2zM606 619h2v2h-2zM174 44h2v2h-2zM359 399h2v2h-2zM508 582h2v2h-2zM147 6h2v2h-2zM288 16h2v2h-2zM89 504h2v2h-2zM217 262h2v2h-2zM213 1h2v2h-2zM650 501h2v2h-2zM377 309h2v2h-2zM444 605h2v2h-2zM211 585h2v2h-2zM314 563h2v2h-2zM66 144h2v2h-2zM64 558h2v2h-2zM304 473h2v2h-2zM166 680h2v2h-2zM190 616h2v2h-2zM28 291h2v2h-2zM65 384h2v2h-2zM147 563h2v2h-2zM656 517h2v2h-2zM136 356h2v2h-2zM162 602h2v2h-2zM519 525h2v2h-2zM456 279h2v2h-2zM420 527h2v2h-2zM170 655h2v2h-2zM314 575h2v2h-2zM15 420h2v2h-2zM619 652h2v2h-2zM262 421h2v2h-2zM476 332h2v2h-2zM565 38h2v2h-2zM113 652h2v2h-2zM142 613h2v2h-2zM17 202h2v2h-2zM169 619h2v2h-2zM409 367h2v2h-2zM621 25h2v2h-2zM399 566h2v2h-2zM72 638h2v2h-2zM227 351h2v2h-2zM638 84h2v2h-2zM429 474h2v2h-2zM493 387h2v2h-2zM192 111h2v2h-2zM156 238h2v2h-2zM174 242h2v2h-2zM394 551h2v2h-2zM100 324h2v2h-2zM424 182h2v2h-2zM556 46h2v2h-2zM347 1h2v2h-2zM371 63h2v2h-2zM115 318h2v2h-2zM494 525h2v2h-2zM43 302h2v2h-2zM18 452h2v2h-2zM232 484h2v2h-2zM536 200h2v2h-2zM2 479h2v2h-2zM179 406h2v2h-2zM334 53h2v2h-2zM34 389h2v2h-2zM569 618h2v2h-2zM582 22h2v2h-2zM20 222h2v2h-2zM211 181h2v2h-2zM488 410h2v2h-2zM637 529h2v2h-2zM448 259h2v2h-2zM529 425h2v2h-2zM116 301h2v2h-2zM200 550h2v2h-2zM507 575h2v2h-2zM7 349h2v2h-2zM550 373h2v2h-2zM418 306h2v2h-2zM273 192h2v2h-2zM284 205h2v2h-2zM505 21h2v2h-2zM93 195h2v2h-2zM311 557h2v2h-2zM615 497h2v2h-2zM119 187h2v2h-2zM305 93h2v2h-2zM190 200h2v2h-2zM243 99h2v2h-2zM268 229h2v2h-2zM296 382h2v2h-2zM494 114h2v2h-2zM182 259h2v2h-2zM296 370h2v2h-2zM371 136h2v2h-2zM537 430h2v2h-2zM256 239h2v2h-2zM186 249h2v2h-2zM459 234h2v2h-2zM12 409h2v2h-2zM68 357h2v2h-2zM376 582h2v2h-2zM492 550h2v2h-2zM293 26h2v2h-2zM202 25h2v2h-2zM205 255h2v2h-2zM422 523h2v2h-2zM204 166h2v2h-2zM504 445h2v2h-2zM0 189h2v2h-2zM301 378h2v2h-2zM116 188h2v2h-2zM70 266h2v2h-2zM82 423h2v2h-2zM653 71h2v2h-2zM422 98h2v2h-2zM415 195h2v2h-2zM160 1h2v2h-2zM273 637h2v2h-2zM395 638h2v2h-2zM227 181h2v2h-2zM382 75h2v2h-2zM368 225h2v2h-2zM165 681h2v2h-2zM654 180h2v2h-2zM265 94h2v2h-2zM348 14h2v2h-2zM651 428h2v2h-2zM575 605h2v2h-2zM535 301h2v2h-2zM131 163h2v2h-2zM132 40h2v2h-2zM217 278h2v2h-2zM328 51h2v2h-2zM224 569h2v2h-2zM280 125h2v2h-2zM560 237h2v2h-2zM33 352h2v2h-2zM575 285h2v2h-2zM172 41h2v2h-2zM407 276h2v2h-2zM550 558h2v2h-2zM574 351h2v2h-2zM59 512h2v2h-2zM293 640h2v2h-2zM631 602h2v2h-2zM514 375h2v2h-2zM293 378h2v2h-2zM596 381h2v2h-2zM150 486h2v2h-2zM412 316h2v2h-2zM438 609h2v2h-2zM429 205h2v2h-2zM319 436h2v2h-2zM64 628h2v2h-2zM519 539h2v2h-2zM277 486h2v2h-2zM279 273h2v2h-2zM525 323h2v2h-2zM203 120h2v2h-2zM375 64h2v2h-2zM175 441h2v2h-2zM51 214h2v2h-2zM285 146h2v2h-2zM462 636h2v2h-2zM42 494h2v2h-2zM635 31h2v2h-2zM157 560h2v2h-2zM471 521h2v2h-2zM566 587h2v2h-2zM355 556h2v2h-2zM590 505h2v2h-2zM486 492h2v2h-2zM421 32h2v2h-2zM559 295h2v2h-2zM252 617h2v2h-2zM412 444h2v2h-2zM116 648h2v2h-2zM48 206h2v2h-2zM443 402h2v2h-2zM408 545h2v2h-2zM357 276h2v2h-2zM102 143h2v2h-2zM314 423h2v2h-2zM491 466h2v2h-2zM327 536h2v2h-2zM441 106h2v2h-2zM548 454h2v2h-2zM240 526h2v2h-2zM19 502h2v2h-2zM581 274h2v2h-2zM94 655h2v2h-2zM310 642h2v2h-2zM562 415h2v2h-2zM447 494h2v2h-2zM627 65h2v2h-2zM605 249h2v2h-2zM343 616h2v2h-2zM11 458h2v2h-2zM224 415h2v2h-2zM431 597h2v2h-2zM52 207h2v2h-2zM402 209h2v2h-2zM167 587h2v2h-2zM422 440h2v2h-2zM613 574h2v2h-2zM213 211h2v2h-2zM481 570h2v2h-2zM209 146h2v2h-2zM506 409h2v2h-2zM49 140h2v2h-2zM306 393h2v2h-2zM345 541h2v2h-2zM118 238h2v2h-2zM101 516h2v2h-2zM574 62h2v2h-2zM102 127h2v2h-2zM564 251h2v2h-2zM307 669h2v2h-2zM353 144h2v2h-2zM65 512h2v2h-2zM407 580h2v2h-2zM23 603h2v2h-2zM60 397h2v2h-2zM460 476h2v2h-2zM352 206h2v2h-2zM470 80h2v2h-2zM633 53h2v2h-2zM16 624h2v2h-2zM495 270h2v2h-2zM259 390h2v2h-2zM567 150h2v2h-2zM457 306h2v2h-2zM30 145h2v2h-2zM409 18h2v2h-2zM428 211h2v2h-2zM500 519h2v2h-2zM69 470h2v2h-2zM519 408h2v2h-2zM447 160h2v2h-2zM55 63h2v2h-2zM160 49h2v2h-2zM570 93h2v2h-2zM602 521h2v2h-2zM535 59h2v2h-2zM115 349h2v2h-2zM201 527h2v2h-2zM536 420h2v2h-2zM255 166h2v2h-2zM62 620h2v2h-2zM361 298h2v2h-2zM425 236h2v2h-2zM303 147h2v2h-2zM409 79h2v2h-2zM609 578h2v2h-2zM179 213h2v2h-2zM588 624h2v2h-2zM623 674h2v2h-2zM225 151h2v2h-2zM83 365h2v2h-2zM69 578h2v2h-2zM311 682h2v2h-2zM387 95h2v2h-2zM357 351h2v2h-2zM239 613h2v2h-2zM593 148h2v2h-2zM287 75h2v2h-2zM56 275h2v2h-2zM189 472h2v2h-2zM138 104h2v2h-2zM657 85h2v2h-2zM73 12h2v2h-2zM40 344h2v2h-2zM331 58h2v2h-2zM403 111h2v2h-2zM606 69h2v2h-2zM38 37h2v2h-2zM569 393h2v2h-2zM625 468h2v2h-2zM614 180h2v2h-2zM571 381h2v2h-2zM137 39h2v2h-2zM86 672h2v2h-2zM617 343h2v2h-2zM85 510h2v2h-2zM528 426h2v2h-2zM499 665h2v2h-2zM598 194h2v2h-2zM253 493h2v2h-2zM562 139h2v2h-2zM321 67h2v2h-2zM301 481h2v2h-2zM148 445h2v2h-2zM307 521h2v2h-2zM78 357h2v2h-2zM158 27h2v2h-2zM94 668h2v2h-2zM445 150h2v2h-2zM658 455h2v2h-2zM428 613h2v2h-2zM552 174h2v2h-2zM358 653h2v2h-2zM485 121h2v2h-2zM282 676h2v2h-2zM349 130h2v2h-2zM165 404h2v2h-2zM146 124h2v2h-2zM12 259h2v2h-2zM492 654h2v2h-2zM310 507h2v2h-2zM152 168h2v2h-2zM445 481h2v2h-2zM350 197h2v2h-2zM341 574h2v2h-2zM284 221h2v2h-2zM527 397h2v2h-2zM591 295h2v2h-2zM171 671h2v2h-2zM324 398h2v2h-2zM427 62h2v2h-2zM296 576h2v2h-2zM605 189h2v2h-2zM454 452h2v2h-2zM136 668h2v2h-2zM474 392h2v2h-2zM9 209h2v2h-2zM36 64h2v2h-2zM374 130h2v2h-2zM123 606h2v2h-2zM651 17h2v2h-2zM551 312h2v2h-2zM254 156h2v2h-2zM530 475h2v2h-2zM89 418h2v2h-2zM473 443h2v2h-2zM575 618h2v2h-2zM240 191h2v2h-2zM584 47h2v2h-2zM436 82h2v2h-2zM399 335h2v2h-2zM424 164h2v2h-2zM110 119h2v2h-2zM331 420h2v2h-2zM393 444h2v2h-2zM122 577h2v2h-2zM533 423h2v2h-2zM47 167h2v2h-2zM505 236h2v2h-2zM225 596h2v2h-2zM102 97h2v2h-2zM6 127h2v2h-2zM194 105h2v2h-2zM272 279h2v2h-2zM302 38h2v2h-2zM5 395h2v2h-2zM572 63h2v2h-2zM211 70h2v2h-2zM494 234h2v2h-2zM401 626h2v2h-2zM544 632h2v2h-2zM62 43h2v2h-2zM110 660h2v2h-2zM167 427h2v2h-2zM504 544h2v2h-2zM458 301h2v2h-2zM101 275h2v2h-2zM543 629h2v2h-2zM157 480h2v2h-2zM309 189h2v2h-2zM303 303h2v2h-2zM403 521h2v2h-2zM432 141h2v2h-2zM415 225h2v2h-2zM58 284h2v2h-2zM100 65h2v2h-2zM390 291h2v2h-2zM19 610h2v2h-2zM553 491h2v2h-2zM319 672h2v2h-2zM19 546h2v2h-2zM177 275h2v2h-2zM648 32h2v2h-2zM335 679h2v2h-2zM548 126h2v2h-2zM322 96h2v2h-2zM86 528h2v2h-2zM623 620h2v2h-2zM568 304h2v2h-2zM121 129h2v2h-2zM203 76h2v2h-2zM177 224h2v2h-2zM199 674h2v2h-2zM205 432h2v2h-2zM631 88h2v2h-2zM293 647h2v2h-2zM148 177h2v2h-2zM18 648h2v2h-2zM280 431h2v2h-2zM164 601h2v2h-2zM321 616h2v2h-2zM409 640h2v2h-2zM248 321h2v2h-2zM339 159h2v2h-2zM493 652h2v2h-2zM509 677h2v2h-2zM107 534h2v2h-2zM83 407h2v2h-2zM228 168h2v2h-2zM157 230h2v2h-2zM233 683h2v2h-2zM518 517h2v2h-2zM88 176h2v2h-2zM127 481h2v2h-2zM297 573h2v2h-2zM321 38h2v2h-2zM446 635h2v2h-2zM216 528h2v2h-2zM136 192h2v2h-2zM80 50h2v2h-2zM514 22h2v2h-2zM412 332h2v2h-2zM369 5h2v2h-2zM102 57h2v2h-2zM434 398h2v2h-2zM113 222h2v2h-2zM54 282h2v2h-2zM430 355h2v2h-2zM592 143h2v2h-2zM62 49h2v2h-2zM99 84h2v2h-2zM85 643h2v2h-2zM530 509h2v2h-2zM389 659h2v2h-2zM388 627h2v2h-2zM308 438h2v2h-2zM380 245h2v2h-2zM185 221h2v2h-2zM461 53h2v2h-2zM379 490h2v2h-2zM44 505h2v2h-2zM476 580h2v2h-2zM643 220h2v2h-2zM194 331h2v2h-2zM492 511h2v2h-2zM623 145h2v2h-2zM593 438h2v2h-2zM28 680h2v2h-2zM13 411h2v2h-2zM96 351h2v2h-2zM426 621h2v2h-2zM120 297h2v2h-2zM334 538h2v2h-2zM375 386h2v2h-2zM370 38h2v2h-2zM180 397h2v2h-2zM276 659h2v2h-2zM163 148h2v2h-2zM572 63h2v2h-2zM606 17h2v2h-2zM556 231h2v2h-2zM520 658h2v2h-2zM101 169h2v2h-2zM598 510h2v2h-2zM647 54h2v2h-2zM388 145h2v2h-2zM634 337h2v2h-2zM570 384h2v2h-2zM253 107h2v2h-2zM352 463h2v2h-2zM202 627h2v2h-2zM89 18h2v2h-2zM169 478h2v2h-2zM652 398h2v2h-2zM17 583h2v2h-2zM132 595h2v2h-2zM155 436h2v2h-2zM152 247h2v2h-2zM122 442h2v2h-2zM484 375h2v2h-2zM293 313h2v2h-2zM224 540h2v2h-2zM22 643h2v2h-2zM380 552h2v2h-2zM377 512h2v2h-2zM164 440h2v2h-2zM308 170h2v2h-2zM272 214h2v2h-2zM602 527h2v2h-2zM603 60h2v2h-2zM637 401h2v2h-2zM626 542h2v2h-2zM395 287h2v2h-2zM626 276h2v2h-2zM356 271h2v2h-2zM116 354h2v2h-2zM222 470h2v2h-2zM554 466h2v2h-2zM146 351h2v2h-2zM482 254h2v2h-2zM90 434h2v2h-2zM299 341h2v2h-2zM587 239h2v2h-2zM370 582h2v2h-2zM225 74h2v2h-2zM97 157h2v2h-2zM69 47h2v2h-2zM253 621h2v2h-2zM598 296h2v2h-2zM622 613h2v2h-2zM639 670h2v2h-2zM649 426h2v2h-2zM258 428h2v2h-2zM664 654h2v2h-2zM67 423h2v2h-2zM118 618h2v2h-2zM232 10h2v2h-2z"/><path fill="#B0B0B0" d="M267 575h2v2h-2zM422 599h2v2h-2zM151 210h2v2h-2zM591 186h2v2h-2zM238 536h2v2h-2zM511 221h2v2h-2zM234 358h2v2h-2zM50 62h2v2h-2zM376 220h2v2h-2zM124 492h2v2h-2zM14 641h2v2h-2zM92 532h2v2h-2zM150 3h2v2h-2zM98 270h2v2h-2zM423 525h2v2h-2zM471 199h2v2h-2zM584 206h2v2h-2zM299 128h2v2h-2zM139 2h2v2h-2zM213 307h2v2h-2zM397 77h2v2h-2zM93 96h2v2h-2zM562 516h2v2h-2zM532 155h2v2h-2zM25 380h2v2h-2zM397 362h2v2h-2zM553 673h2v2h-2zM637 58h2v2h-2zM316 221h2v2h-2zM471 511h2v2h-2zM466 14h2v2h-2zM74 71h2v2h-2zM255 666h2v2h-2zM516 111h2v2h-2zM84 431h2v2h-2zM394 268h2v2h-2zM651 180h2v2h-2zM490 340h2v2h-2zM131 624h2v2h-2zM514 289h2v2h-2zM322 422h2v2h-2zM657 124h2v2h-2zM469 159h2v2h-2zM319 330h2v2h-2zM27 355h2v2h-2zM509 140h2v2h-2zM462 11h2v2h-2zM483 230h2v2h-2zM65 205h2v2h-2zM601 254h2v2h-2zM401 21h2v2h-2zM175 296h2v2h-2zM144 238h2v2h-2zM158 522h2v2h-2zM565 173h2v2h-2zM158 568h2v2h-2zM2 529h2v2h-2zM103 111h2v2h-2zM189 76h2v2h-2zM46 459h2v2h-2zM122 321h2v2h-2zM628 443h2v2h-2zM497 107h2v2h-2zM135 179h2v2h-2zM13 493h2v2h-2zM230 346h2v2h-2zM25 13h2v2h-2zM279 77h2v2h-2zM331 571h2v2h-2zM186 245h2v2h-2zM111 192h2v2h-2zM13 192h2v2h-2zM314 50h2v2h-2zM351 423h2v2h-2zM500 270h2v2h-2zM254 500h2v2h-2zM564 317h2v2h-2zM544 361h2v2h-2zM25 361h2v2h-2zM340 669h2v2h-2zM348 227h2v2h-2zM271 284h2v2h-2zM518 674h2v2h-2zM374 623h2v2h-2zM32 37h2v2h-2zM530 72h2v2h-2zM435 332h2v2h-2zM205 635h2v2h-2zM457 438h2v2h-2zM423 188h2v2h-2zM347 281h2v2h-2zM220 558h2v2h-2zM9 665h2v2h-2zM112 579h2v2h-2zM430 77h2v2h-2zM202 254h2v2h-2zM620 216h2v2h-2zM615 112h2v2h-2zM409 153h2v2h-2zM388 290h2v2h-2zM117 72h2v2h-2zM445 95h2v2h-2zM336 551h2v2h-2zM3 626h2v2h-2zM93 323h2v2h-2zM295 186h2v2h-2zM88 89h2v2h-2zM96 117h2v2h-2zM189 361h2v2h-2zM434 454h2v2h-2zM439 464h2v2h-2zM254 420h2v2h-2zM77 530h2v2h-2zM53 91h2v2h-2zM17 80h2v2h-2zM88 410h2v2h-2zM350 414h2v2h-2zM56 1h2v2h-2zM551 434h2v2h-2zM647 418h2v2h-2zM583 114h2v2h-2zM64 263h2v2h-2zM215 432h2v2h-2zM292 355h2v2h-2zM219 311h2v2h-2zM148 339h2v2h-2zM44 178h2v2h-2zM316 88h2v2h-2zM606 626h2v2h-2zM291 453h2v2h-2zM573 507h2v2h-2zM660 48h2v2h-2zM48 454h2v2h-2zM524 539h2v2h-2zM363 354h2v2h-2zM423 141h2v2h-2zM64 557h2v2h-2zM442 264h2v2h-2zM580 643h2v2h-2zM135 603h2v2h-2zM118 584h2v2h-2zM216 197h2v2h-2zM317 244h2v2h-2zM610 431h2v2h-2zM228 574h2v2h-2zM39 431h2v2h-2zM186 196h2v2h-2zM501 197h2v2h-2zM415 288h2v2h-2zM535 259h2v2h-2zM142 0h2v2h-2zM552 225h2v2h-2zM594 128h2v2h-2zM628 325h2v2h-2zM70 265h2v2h-2zM109 196h2v2h-2zM272 207h2v2h-2zM75 527h2v2h-2zM130 647h2v2h-2zM540 137h2v2h-2zM67 558h2v2h-2zM440 453h2v2h-2zM97 508h2v2h-2zM80 1h2v2h-2zM322 311h2v2h-2zM44 306h2v2h-2zM329 309h2v2h-2zM63 554h2v2h-2zM271 22h2v2h-2zM193 506h2v2h-2zM507 79h2v2h-2zM421 339h2v2h-2zM591 234h2v2h-2zM621 562h2v2h-2zM554 295h2v2h-2zM243 176h2v2h-2zM428 311h2v2h-2zM463 326h2v2h-2zM498 74h2v2h-2zM103 388h2v2h-2zM128 676h2v2h-2zM42 64h2v2h-2zM613 337h2v2h-2zM105 362h2v2h-2zM27 56h2v2h-2zM300 565h2v2h-2zM91 527h2v2h-2zM619 359h2v2h-2zM328 7h2v2h-2zM463 154h2v2h-2zM553 106h2v2h-2zM562 190h2v2h-2zM66 291h2v2h-2zM202 0h2v2h-2zM74 590h2v2h-2zM638 544h2v2h-2zM143 34h2v2h-2zM190 587h2v2h-2zM634 98h2v2h-2zM70 531h2v2h-2zM504 487h2v2h-2zM295 417h2v2h-2zM540 197h2v2h-2zM461 134h2v2h-2zM336 448h2v2h-2zM77 667h2v2h-2zM611 530h2v2h-2zM37 613h2v2h-2zM65 254h2v2h-2zM634 634h2v2h-2zM228 507h2v2h-2zM417 332h2v2h-2zM516 405h2v2h-2zM5 107h2v2h-2zM475 519h2v2h-2zM142 377h2v2h-2zM443 7h2v2h-2zM246 134h2v2h-2zM484 430h2v2h-2zM652 383h2v2h-2zM574 677h2v2h-2zM52 515h2v2h-2zM438 670h2v2h-2zM638 383h2v2h-2zM240 502h2v2h-2zM601 180h2v2h-2zM245 8h2v2h-2zM383 99h2v2h-2zM585 262h2v2h-2zM630 402h2v2h-2zM283 645h2v2h-2zM377 146h2v2h-2zM268 594h2v2h-2zM54 657h2v2h-2zM461 416h2v2h-2zM355 325h2v2h-2zM379 441h2v2h-2zM421 439h2v2h-2zM115 360h2v2h-2zM476 398h2v2h-2zM251 103h2v2h-2zM160 16h2v2h-2zM210 74h2v2h-2zM189 292h2v2h-2zM229 561h2v2h-2zM317 114h2v2h-2zM431 26h2v2h-2zM385 416h2v2h-2zM175 601h2v2h-2zM136 372h2v2h-2zM624 470h2v2h-2zM387 98h2v2h-2zM624 102h2v2h-2zM650 630h2v2h-2zM378 288h2v2h-2zM207 259h2v2h-2zM409 568h2v2h-2zM545 459h2v2h-2zM415 628h2v2h-2zM256 493h2v2h-2zM339 261h2v2h-2zM160 350h2v2h-2zM134 301h2v2h-2zM54 458h2v2h-2zM323 208h2v2h-2zM326 392h2v2h-2zM59 516h2v2h-2zM155 449h2v2h-2zM176 605h2v2h-2zM395 301h2v2h-2zM152 427h2v2h-2zM616 23h2v2h-2zM634 57h2v2h-2zM320 235h2v2h-2zM174 210h2v2h-2zM51 164h2v2h-2zM129 649h2v2h-2zM31 13h2v2h-2zM661 353h2v2h-2zM580 237h2v2h-2zM606 74h2v2h-2zM231 218h2v2h-2zM490 350h2v2h-2zM61 271h2v2h-2zM247 619h2v2h-2zM657 73h2v2h-2zM449 294h2v2h-2zM631 509h2v2h-2zM302 439h2v2h-2zM252 357h2v2h-2zM284 198h2v2h-2zM17 215h2v2h-2zM77 285h2v2h-2zM149 373h2v2h-2zM510 75h2v2h-2zM197 642h2v2h-2zM450 36h2v2h-2zM154 417h2v2h-2zM579 183h2v2h-2zM105 563h2v2h-2zM424 350h2v2h-2zM448 262h2v2h-2zM196 85h2v2h-2zM498 532h2v2h-2zM574 654h2v2h-2zM361 224h2v2h-2zM365 409h2v2h-2zM657 655h2v2h-2zM153 345h2v2h-2zM154 605h2v2h-2zM566 454h2v2h-2zM653 340h2v2h-2zM40 133h2v2h-2zM444 283h2v2h-2zM372 619h2v2h-2zM587 173h2v2h-2zM570 314h2v2h-2zM201 155h2v2h-2zM316 397h2v2h-2zM304 571h2v2h-2zM70 417h2v2h-2zM534 145h2v2h-2zM475 359h2v2h-2zM381 273h2v2h-2zM211 677h2v2h-2zM123 287h2v2h-2zM173 446h2v2h-2zM236 633h2v2h-2zM417 495h2v2h-2zM1 165h2v2h-2zM596 410h2v2h-2zM611 260h2v2h-2zM214 113h2v2h-2zM319 648h2v2h-2zM52 323h2v2h-2zM596 541h2v2h-2zM366 191h2v2h-2zM415 293h2v2h-2zM389 331h2v2h-2zM494 262h2v2h-2zM366 127h2v2h-2zM196 580h2v2h-2zM596 557h2v2h-2zM352 611h2v2h-2zM342 285h2v2h-2zM163 403h2v2h-2zM566 593h2v2h-2zM553 451h2v2h-2zM283 298h2v2h-2zM318 451h2v2h-2zM506 29h2v2h-2zM387 34h2v2h-2zM488 478h2v2h-2zM375 113h2v2h-2zM660 418h2v2h-2zM541 116h2v2h-2zM39 212h2v2h-2zM88 141h2v2h-2zM558 50h2v2h-2zM577 374h2v2h-2zM541 451h2v2h-2zM413 45h2v2h-2zM305 604h2v2h-2zM404 637h2v2h-2zM41 501h2v2h-2zM616 402h2v2h-2zM41 507h2v2h-2zM455 536h2v2h-2zM147 47h2v2h-2zM549 658h2v2h-2zM324 248h2v2h-2zM320 339h2v2h-2zM13 286h2v2h-2zM103 293h2v2h-2zM217 580h2v2h-2zM317 178h2v2h-2zM394 205h2v2h-2zM648 181h2v2h-2zM323 523h2v2h-2zM497 418h2v2h-2zM105 331h2v2h-2zM183 161h2v2h-2zM11 264h2v2h-2zM628 577h2v2h-2zM11 216h2v2h-2zM218 574h2v2h-2zM439 271h2v2h-2zM254 40h2v2h-2zM58 226h2v2h-2zM392 326h2v2h-2zM198 402h2v2h-2zM98 489h2v2h-2zM102 99h2v2h-2zM565 291h2v2h-2zM61 445h2v2h-2zM64 462h2v2h-2zM350 477h2v2h-2zM179 345h2v2h-2zM619 270h2v2h-2zM109 11h2v2h-2zM42 255h2v2h-2zM4 107h2v2h-2zM491 409h2v2h-2zM233 391h2v2h-2zM16 617h2v2h-2zM140 108h2v2h-2zM325 316h2v2h-2zM376 282h2v2h-2zM494 447h2v2h-2zM310 20h2v2h-2zM341 232h2v2h-2zM330 421h2v2h-2zM201 209h2v2h-2zM637 492h2v2h-2zM524 570h2v2h-2zM319 587h2v2h-2zM277 88h2v2h-2zM147 189h2v2h-2zM398 327h2v2h-2zM294 571h2v2h-2zM2 640h2v2h-2zM471 156h2v2h-2zM374 148h2v2h-2zM571 536h2v2h-2zM83 178h2v2h-2zM565 90h2v2h-2zM412 404h2v2h-2zM160 38h2v2h-2zM508 113h2v2h-2zM654 218h2v2h-2zM93 83h2v2h-2zM485 201h2v2h-2zM454 653h2v2h-2zM662 521h2v2h-2zM584 100h2v2h-2zM372 665h2v2h-2zM634 449h2v2h-2zM580 495h2v2h-2zM125 435h2v2h-2zM171 315h2v2h-2zM324 117h2v2h-2zM652 322h2v2h-2zM180 193h2v2h-2zM183 548h2v2h-2zM560 311h2v2h-2zM503 488h2v2h-2zM45 195h2v2h-2zM1 341h2v2h-2zM568 12h2v2h-2zM33 492h2v2h-2zM334 75h2v2h-2zM430 223h2v2h-2zM237 473h2v2h-2zM361 433h2v2h-2zM214 682h2v2h-2zM302 108h2v2h-2zM617 270h2v2h-2zM585 494h2v2h-2zM634 372h2v2h-2zM457 5h2v2h-2zM223 167h2v2h-2zM331 152h2v2h-2zM584 22h2v2h-2zM2 682h2v2h-2zM91 484h2v2h-2zM20 672h2v2h-2zM538 277h2v2h-2zM245 350h2v2h-2zM115 565h2v2h-2zM252 408h2v2h-2zM489 25h2v2h-2zM615 95h2v2h-2zM383 247h2v2h-2zM630 218h2v2h-2zM68 176h2v2h-2zM529 145h2v2h-2zM660 49h2v2h-2zM294 180h2v2h-2zM229 432h2v2h-2zM32 154h2v2h-2zM48 447h2v2h-2zM628 122h2v2h-2zM358 196h2v2h-2zM154 479h2v2h-2zM370 518h2v2h-2zM323 304h2v2h-2zM78 336h2v2h-2zM172 563h2v2h-2zM88 666h2v2h-2zM198 38h2v2h-2zM145 413h2v2h-2zM456 500h2v2h-2zM53 212h2v2h-2zM208 206h2v2h-2zM213 150h2v2h-2zM205 21h2v2h-2zM589 152h2v2h-2zM204 328h2v2h-2zM571 632h2v2h-2zM261 173h2v2h-2zM136 649h2v2h-2zM195 423h2v2h-2zM547 562h2v2h-2zM637 98h2v2h-2zM299 614h2v2h-2zM418 171h2v2h-2zM336 308h2v2h-2zM167 437h2v2h-2zM554 78h2v2h-2zM488 345h2v2h-2zM160 187h2v2h-2zM661 207h2v2h-2zM276 488h2v2h-2zM439 204h2v2h-2zM78 355h2v2h-2zM634 255h2v2h-2zM596 636h2v2h-2zM220 459h2v2h-2zM312 150h2v2h-2zM431 14h2v2h-2zM436 657h2v2h-2zM64 456h2v2h-2zM231 649h2v2h-2zM177 53h2v2h-2zM475 618h2v2h-2zM500 334h2v2h-2zM623 465h2v2h-2zM516 415h2v2h-2zM151 290h2v2h-2zM94 444h2v2h-2zM507 71h2v2h-2zM350 114h2v2h-2zM562 565h2v2h-2zM256 109h2v2h-2zM534 607h2v2h-2zM159 514h2v2h-2zM568 505h2v2h-2zM58 353h2v2h-2zM638 624h2v2h-2zM583 138h2v2h-2zM148 402h2v2h-2zM650 570h2v2h-2zM2 136h2v2h-2zM653 89h2v2h-2zM67 37h2v2h-2zM40 22h2v2h-2zM498 68h2v2h-2zM349 353h2v2h-2zM314 158h2v2h-2zM537 228h2v2h-2zM351 272h2v2h-2zM113 549h2v2h-2zM300 645h2v2h-2zM272 626h2v2h-2zM173 448h2v2h-2zM380 427h2v2h-2zM16 148h2v2h-2zM101 536h2v2h-2zM646 404h2v2h-2zM443 139h2v2h-2zM586 35h2v2h-2zM602 450h2v2h-2zM593 682h2v2h-2zM264 679h2v2h-2zM41 332h2v2h-2zM389 302h2v2h-2zM651 539h2v2h-2zM508 421h2v2h-2zM376 318h2v2h-2zM489 406h2v2h-2zM512 354h2v2h-2zM271 611h2v2h-2zM452 91h2v2h-2zM343 294h2v2h-2zM238 117h2v2h-2zM194 616h2v2h-2zM634 448h2v2h-2zM318 31h2v2h-2zM107 174h2v2h-2zM505 478h2v2h-2zM634 39h2v2h-2zM487 657h2v2h-2zM437 364h2v2h-2zM99 393h2v2h-2zM161 30h2v2h-2zM286 373h2v2h-2zM429 424h2v2h-2zM0 241h2v2h-2zM244 643h2v2h-2zM130 497h2v2h-2zM255 664h2v2h-2zM52 261h2v2h-2zM340 375h2v2h-2zM18 7h2v2h-2zM198 76h2v2h-2zM299 558h2v2h-2zM50 605h2v2h-2zM548 388h2v2h-2zM95 190h2v2h-2zM600 454h2v2h-2zM186 304h2v2h-2zM7 430h2v2h-2zM644 273h2v2h-2zM34 329h2v2h-2zM215 511h2v2h-2zM57 75h2v2h-2zM255 333h2v2h-2zM611 413h2v2h-2zM604 7h2v2h-2zM565 439h2v2h-2zM591 107h2v2h-2zM493 116h2v2h-2zM356 646h2v2h-2zM100 435h2v2h-2zM602 11h2v2h-2zM447 267h2v2h-2zM97 683h2v2h-2zM165 268h2v2h-2zM485 408h2v2h-2zM284 148h2v2h-2zM388 210h2v2h-2zM272 588h2v2h-2zM264 591h2v2h-2zM406 158h2v2h-2zM651 418h2v2h-2zM25 9h2v2h-2zM126 9h2v2h-2zM148 122h2v2h-2zM584 583h2v2h-2zM519 156h2v2h-2zM640 479h2v2h-2zM69 654h2v2h-2zM359 248h2v2h-2zM204 434h2v2h-2zM424 371h2v2h-2zM598 38h2v2h-2zM438 162h2v2h-2zM638 162h2v2h-2zM630 530h2v2h-2zM640 409h2v2h-2zM505 140h2v2h-2zM235 193h2v2h-2zM70 122h2v2h-2zM77 233h2v2h-2zM342 65h2v2h-2zM416 17h2v2h-2zM139 49h2v2h-2zM99 661h2v2h-2zM586 28h2v2h-2zM341 434h2v2h-2zM446 149h2v2h-2zM376 97h2v2h-2zM432 470h2v2h-2zM259 296h2v2h-2zM554 73h2v2h-2zM562 346h2v2h-2zM259 529h2v2h-2zM22 454h2v2h-2zM570 362h2v2h-2zM307 541h2v2h-2zM264 313h2v2h-2zM214 667h2v2h-2zM299 547h2v2h-2zM614 609h2v2h-2zM283 504h2v2h-2zM21 50h2v2h-2zM147 355h2v2h-2zM573 376h2v2h-2zM245 335h2v2h-2zM287 615h2v2h-2zM635 607h2v2h-2zM598 158h2v2h-2zM271 677h2v2h-2zM115 421h2v2h-2zM225 152h2v2h-2zM563 152h2v2h-2zM476 572h2v2h-2zM439 476h2v2h-2zM294 323h2v2h-2zM648 569h2v2h-2zM594 569h2v2h-2zM156 623h2v2h-2zM178 205h2v2h-2zM547 569h2v2h-2zM275 363h2v2h-2zM30 34h2v2h-2zM567 418h2v2h-2zM487 237h2v2h-2zM20 179h2v2h-2zM647 4h2v2h-2zM591 607h2v2h-2zM274 377h2v2h-2zM154 588h2v2h-2zM410 267h2v2h-2zM491 549h2v2h-2zM391 266h2v2h-2zM177 648h2v2h-2zM94 260h2v2h-2zM602 154h2v2h-2zM471 342h2v2h-2zM562 143h2v2h-2zM542 275h2v2h-2zM562 281h2v2h-2zM310 432h2v2h-2zM88 119h2v2h-2zM541 593h2v2h-2zM59 558h2v2h-2zM50 207h2v2h-2zM214 588h2v2h-2zM629 557h2v2h-2zM611 20h2v2h-2zM455 28h2v2h-2zM630 462h2v2h-2zM564 255h2v2h-2zM517 142h2v2h-2zM593 575h2v2h-2zM557 600h2v2h-2zM13 453h2v2h-2zM36 651h2v2h-2zM648 471h2v2h-2zM209 31h2v2h-2zM84 203h2v2h-2zM467 26h2v2h-2zM160 229h2v2h-2zM268 382h2v2h-2zM603 369h2v2h-2zM147 155h2v2h-2zM500 167h2v2h-2zM217 15h2v2h-2zM187 447h2v2h-2zM26 408h2v2h-2zM45 507h2v2h-2zM266 640h2v2h-2zM178 651h2v2h-2zM117 91h2v2h-2zM642 610h2v2h-2zM376 511h2v2h-2zM511 449h2v2h-2zM390 196h2v2h-2zM35 127h2v2h-2zM595 79h2v2h-2zM232 99h2v2h-2zM546 344h2v2h-2zM547 621h2v2h-2zM145 419h2v2h-2zM568 554h2v2h-2zM29 602h2v2h-2zM556 507h2v2h-2zM199 220h2v2h-2zM75 185h2v2h-2zM620 271h2v2h-2zM219 37h2v2h-2zM5 595h2v2h-2zM249 381h2v2h-2zM78 427h2v2h-2zM465 328h2v2h-2zM221 55h2v2h-2zM516 547h2v2h-2zM534 474h2v2h-2zM391 535h2v2h-2zM60 119h2v2h-2zM417 117h2v2h-2zM362 680h2v2h-2zM537 74h2v2h-2zM566 169h2v2h-2zM355 224h2v2h-2zM136 550h2v2h-2zM3 468h2v2h-2zM488 510h2v2h-2zM4 206h2v2h-2zM444 332h2v2h-2zM26 209h2v2h-2zM391 196h2v2h-2zM280 131h2v2h-2zM277 409h2v2h-2zM9 515h2v2h-2zM570 558h2v2h-2zM526 2h2v2h-2zM462 83h2v2h-2zM464 329h2v2h-2zM434 65h2v2h-2zM623 603h2v2h-2zM483 529h2v2h-2zM356 667h2v2h-2zM260 233h2v2h-2zM56 419h2v2h-2zM250 508h2v2h-2zM474 171h2v2h-2zM526 82h2v2h-2zM623 202h2v2h-2zM508 67h2v2h-2zM650 594h2v2h-2zM535 523h2v2h-2zM150 306h2v2h-2zM347 267h2v2h-2zM187 487h2v2h-2zM265 347h2v2h-2zM9 360h2v2h-2zM637 51h2v2h-2zM148 499h2v2h-2zM572 2h2v2h-2zM26 603h2v2h-2zM621 628h2v2h-2zM338 282h2v2h-2zM182 596h2v2h-2zM316 594h2v2h-2zM71 95h2v2h-2zM607 48h2v2h-2zM483 531h2v2h-2zM204 129h2v2h-2zM480 298h2v2h-2zM625 304h2v2h-2zM3 579h2v2h-2zM169 63h2v2h-2zM239 214h2v2h-2zM571 132h2v2h-2zM50 260h2v2h-2zM54 45h2v2h-2zM496 320h2v2h-2zM416 363h2v2h-2zM246 567h2v2h-2zM451 75h2v2h-2zM610 641h2v2h-2zM73 41h2v2h-2zM125 181h2v2h-2zM437 445h2v2h-2zM301 76h2v2h-2zM424 324h2v2h-2zM466 92h2v2h-2zM27 351h2v2h-2zM324 502h2v2h-2zM647 27h2v2h-2zM60 18h2v2h-2zM423 167h2v2h-2zM424 417h2v2h-2zM511 488h2v2h-2zM169 528h2v2h-2zM258 8h2v2h-2zM310 92h2v2h-2zM251 510h2v2h-2zM404 243h2v2h-2zM591 99h2v2h-2zM36 152h2v2h-2zM172 37h2v2h-2zM253 293h2v2h-2zM630 48h2v2h-2zM175 616h2v2h-2zM402 599h2v2h-2zM356 17h2v2h-2zM259 346h2v2h-2zM22 70h2v2h-2zM174 503h2v2h-2zM541 316h2v2h-2zM449 450h2v2h-2zM472 393h2v2h-2zM446 454h2v2h-2zM395 126h2v2h-2zM239 448h2v2h-2zM408 201h2v2h-2zM335 225h2v2h-2zM607 415h2v2h-2zM149 546h2v2h-2zM110 162h2v2h-2zM157 616h2v2h-2zM357 591h2v2h-2zM357 412h2v2h-2zM101 437h2v2h-2zM457 332h2v2h-2zM648 612h2v2h-2zM272 330h2v2h-2zM533 270h2v2h-2zM548 348h2v2h-2zM123 626h2v2h-2zM340 523h2v2h-2zM470 390h2v2h-2zM380 475h2v2h-2zM52 526h2v2h-2zM279 570h2v2h-2z"/><path fill="#707070" d="M426 10h2v2h-2zM305 377h2v2h-2zM382 127h2v2h-2zM93 543h2v2h-2zM444 530h2v2h-2zM132 42h2v2h-2zM80 397h2v2h-2zM183 11h2v2h-2zM624 430h2v2h-2zM506 168h2v2h-2zM189 622h2v2h-2zM415 67h2v2h-2zM585 530h2v2h-2zM60 266h2v2h-2zM45 372h2v2h-2zM616 192h2v2h-2zM526 32h2v2h-2zM290 38h2v2h-2zM333 602h2v2h-2zM178 34h2v2h-2zM433 225h2v2h-2zM556 247h2v2h-2zM482 184h2v2h-2zM566 588h2v2h-2zM241 218h2v2h-2zM525 553h2v2h-2zM223 631h2v2h-2zM208 257h2v2h-2zM439 402h2v2h-2zM594 411h2v2h-2zM655 676h2v2h-2zM584 575h2v2h-2zM488 494h2v2h-2zM488 94h2v2h-2zM364 163h2v2h-2zM251 614h2v2h-2zM383 581h2v2h-2zM609 234h2v2h-2zM546 47h2v2h-2zM630 283h2v2h-2zM362 135h2v2h-2zM173 475h2v2h-2zM600 111h2v2h-2zM422 155h2v2h-2zM571 603h2v2h-2zM5 298h2v2h-2zM224 78h2v2h-2zM545 305h2v2h-2zM536 384h2v2h-2zM26 106h2v2h-2zM158 449h2v2h-2zM494 354h2v2h-2zM444 470h2v2h-2zM228 248h2v2h-2zM448 23h2v2h-2zM382 599h2v2h-2zM0 199h2v2h-2zM297 405h2v2h-2zM339 325h2v2h-2zM432 250h2v2h-2zM596 237h2v2h-2zM454 180h2v2h-2zM529 681h2v2h-2zM445 592h2v2h-2zM380 114h2v2h-2zM580 489h2v2h-2zM0 335h2v2h-2zM608 176h2v2h-2zM429 378h2v2h-2zM134 367h2v2h-2zM506 309h2v2h-2zM440 86h2v2h-2zM315 412h2v2h-2zM93 463h2v2h-2zM571 171h2v2h-2zM96 405h2v2h-2zM534 276h2v2h-2zM514 396h2v2h-2zM86 238h2v2h-2zM391 365h2v2h-2zM481 666h2v2h-2zM139 517h2v2h-2zM159 86h2v2h-2zM76 21h2v2h-2zM577 131h2v2h-2zM612 330h2v2h-2zM636 287h2v2h-2zM44 655h2v2h-2zM69 347h2v2h-2zM158 402h2v2h-2zM601 668h2v2h-2zM45 23h2v2h-2zM411 259h2v2h-2zM43 531h2v2h-2zM59 216h2v2h-2zM125 525h2v2h-2zM395 427h2v2h-2zM175 20h2v2h-2zM578 57h2v2h-2zM451 321h2v2h-2zM639 320h2v2h-2zM583 190h2v2h-2zM301 415h2v2h-2zM103 512h2v2h-2zM151 402h2v2h-2zM82 649h2v2h-2zM635 487h2v2h-2zM393 535h2v2h-2zM5 558h2v2h-2zM600 3h2v2h-2zM391 145h2v2h-2zM69 67h2v2h-2zM593 303h2v2h-2zM373 506h2v2h-2zM275 230h2v2h-2zM232 656h2v2h-2zM139 383h2v2h-2zM62 86h2v2h-2zM180 89h2v2h-2zM124 188h2v2h-2zM182 466h2v2h-2zM338 608h2v2h-2zM538 66h2v2h-2zM573 595h2v2h-2zM489 253h2v2h-2zM270 89h2v2h-2zM545 89h2v2h-2zM281 476h2v2h-2zM544 63h2v2h-2zM491 512h2v2h-2zM119 295h2v2h-2zM664 473h2v2h-2zM576 529h2v2h-2zM231 592h2v2h-2zM588 206h2v2h-2zM111 343h2v2h-2zM18 425h2v2h-2zM579 683h2v2h-2zM136 323h2v2h-2zM476 52h2v2h-2zM507 337h2v2h-2zM587 521h2v2h-2zM584 568h2v2h-2zM6 242h2v2h-2zM557 282h2v2h-2zM303 568h2v2h-2zM394 346h2v2h-2zM617 50h2v2h-2zM323 457h2v2h-2zM450 174h2v2h-2zM139 320h2v2h-2zM376 153h2v2h-2zM402 126h2v2h-2zM106 58h2v2h-2zM480 39h2v2h-2zM2 139h2v2h-2zM546 74h2v2h-2zM55 20h2v2h-2zM433 30h2v2h-2zM186 232h2v2h-2zM287 192h2v2h-2zM69 626h2v2h-2zM597 81h2v2h-2zM283 375h2v2h-2zM410 94h2v2h-2zM27 255h2v2h-2zM592 157h2v2h-2zM298 584h2v2h-2zM409 531h2v2h-2zM239 400h2v2h-2zM167 649h2v2h-2zM465 444h2v2h-2zM642 54h2v2h-2zM393 481h2v2h-2zM570 545h2v2h-2zM526 226h2v2h-2zM125 217h2v2h-2zM576 587h2v2h-2zM484 623h2v2h-2zM77 652h2v2h-2zM48 2h2v2h-2zM463 8h2v2h-2zM202 475h2v2h-2zM462 327h2v2h-2zM498 623h2v2h-2zM266 314h2v2h-2zM449 31h2v2h-2zM343 621h2v2h-2zM310 69h2v2h-2zM249 308h2v2h-2zM379 604h2v2h-2zM396 427h2v2h-2zM27 280h2v2h-2zM623 70h2v2h-2zM224 94h2v2h-2zM5 124h2v2h-2zM549 570h2v2h-2zM166 99h2v2h-2zM42 544h2v2h-2zM630 346h2v2h-2zM77 560h2v2h-2zM401 308h2v2h-2zM662 294h2v2h-2zM584 148h2v2h-2zM507 373h2v2h-2zM298 550h2v2h-2zM646 630h2v2h-2zM322 592h2v2h-2zM647 164h2v2h-2zM579 386h2v2h-2zM447 138h2v2h-2zM591 401h2v2h-2zM238 432h2v2h-2zM426 398h2v2h-2zM359 568h2v2h-2zM167 225h2v2h-2zM334 368h2v2h-2zM84 44h2v2h-2zM207 372h2v2h-2zM341 266h2v2h-2zM349 103h2v2h-2zM436 274h2v2h-2zM364 413h2v2h-2zM475 240h2v2h-2zM47 326h2v2h-2zM581 361h2v2h-2zM2 295h2v2h-2zM91 139h2v2h-2zM24 471h2v2h-2zM20 493h2v2h-2zM37 592h2v2h-2zM244 576h2v2h-2zM403 252h2v2h-2zM572 387h2v2h-2zM559 418h2v2h-2zM661 528h2v2h-2zM247 494h2v2h-2zM165 327h2v2h-2zM305 29h2v2h-2zM5 10h2v2h-2zM290 180h2v2h-2zM517 120h2v2h-2zM325 261h2v2h-2zM629 351h2v2h-2zM507 249h2v2h-2zM545 6h2v2h-2zM472 319h2v2h-2zM345 196h2v2h-2zM150 180h2v2h-2zM408 136h2v2h-2zM640 275h2v2h-2zM207 269h2v2h-2zM497 348h2v2h-2zM47 391h2v2h-2zM428 510h2v2h-2zM118 185h2v2h-2zM557 656h2v2h-2zM478 635h2v2h-2zM248 74h2v2h-2zM117 20h2v2h-2zM85 44h2v2h-2zM477 284h2v2h-2zM653 134h2v2h-2zM253 238h2v2h-2zM0 274h2v2h-2zM219 585h2v2h-2zM79 5h2v2h-2zM393 452h2v2h-2zM647 145h2v2h-2zM186 153h2v2h-2zM226 382h2v2h-2zM260 12h2v2h-2zM102 398h2v2h-2zM17 164h2v2h-2zM103 52h2v2h-2zM510 611h2v2h-2zM629 554h2v2h-2zM484 352h2v2h-2zM453 428h2v2h-2zM226 416h2v2h-2zM291 242h2v2h-2zM421 442h2v2h-2zM383 449h2v2h-2zM171 514h2v2h-2zM187 409h2v2h-2zM191 57h2v2h-2zM231 232h2v2h-2zM507 417h2v2h-2zM83 585h2v2h-2zM426 37h2v2h-2zM483 212h2v2h-2zM97 652h2v2h-2zM296 97h2v2h-2zM607 637h2v2h-2zM50 488h2v2h-2zM604 170h2v2h-2zM528 604h2v2h-2zM439 294h2v2h-2zM445 276h2v2h-2zM380 456h2v2h-2zM147 199h2v2h-2zM257 336h2v2h-2zM648 666h2v2h-2zM286 81h2v2h-2zM402 656h2v2h-2zM426 636h2v2h-2zM166 558h2v2h-2zM46 404h2v2h-2zM417 191h2v2h-2zM80 72h2v2h-2zM261 580h2v2h-2zM399 655h2v2h-2zM101 140h2v2h-2zM310 468h2v2h-2zM549 369h2v2h-2zM342 612h2v2h-2zM588 385h2v2h-2zM490 569h2v2h-2zM545 208h2v2h-2zM243 489h2v2h-2zM185 509h2v2h-2zM408 245h2v2h-2zM656 193h2v2h-2zM563 334h2v2h-2zM9 430h2v2h-2zM138 480h2v2h-2zM417 398h2v2h-2zM373 242h2v2h-2zM20 223h2v2h-2zM528 558h2v2h-2zM273 238h2v2h-2zM374 324h2v2h-2zM582 59h2v2h-2zM601 348h2v2h-2zM502 74h2v2h-2zM371 514h2v2h-2zM331 62h2v2h-2zM380 340h2v2h-2zM315 385h2v2h-2zM264 39h2v2h-2zM351 403h2v2h-2zM68 258h2v2h-2zM653 355h2v2h-2zM533 45h2v2h-2zM50 422h2v2h-2zM255 343h2v2h-2zM164 393h2v2h-2zM314 577h2v2h-2zM317 541h2v2h-2zM236 515h2v2h-2zM438 604h2v2h-2zM513 132h2v2h-2zM543 561h2v2h-2zM485 599h2v2h-2zM147 517h2v2h-2zM532 518h2v2h-2zM605 54h2v2h-2zM595 645h2v2h-2zM506 219h2v2h-2zM145 335h2v2h-2zM68 293h2v2h-2zM496 137h2v2h-2zM171 129h2v2h-2zM551 589h2v2h-2zM558 173h2v2h-2zM0 451h2v2h-2zM99 532h2v2h-2zM258 108h2v2h-2zM592 343h2v2h-2zM34 507h2v2h-2zM657 276h2v2h-2zM579 72h2v2h-2zM225 37h2v2h-2zM416 489h2v2h-2zM240 259h2v2h-2zM165 561h2v2h-2zM467 307h2v2h-2zM435 363h2v2h-2zM438 432h2v2h-2zM251 357h2v2h-2zM544 263h2v2h-2zM116 17h2v2h-2zM70 145h2v2h-2zM554 153h2v2h-2zM434 108h2v2h-2zM291 351h2v2h-2zM297 41h2v2h-2zM426 621h2v2h-2zM49 146h2v2h-2zM265 151h2v2h-2zM199 112h2v2h-2zM648 69h2v2h-2zM4 242h2v2h-2zM545 273h2v2h-2zM118 297h2v2h-2zM380 199h2v2h-2zM205 482h2v2h-2zM552 399h2v2h-2zM452 499h2v2h-2zM82 201h2v2h-2zM568 640h2v2h-2zM251 368h2v2h-2zM330 423h2v2h-2zM218 308h2v2h-2zM314 190h2v2h-2zM559 128h2v2h-2zM303 491h2v2h-2zM133 508h2v2h-2zM125 180h2v2h-2zM205 638h2v2h-2zM628 599h2v2h-2zM210 232h2v2h-2zM201 60h2v2h-2zM358 588h2v2h-2zM578 425h2v2h-2zM472 115h2v2h-2zM548 350h2v2h-2zM7 493h2v2h-2zM112 405h2v2h-2zM508 128h2v2h-2zM59 34h2v2h-2zM213 268h2v2h-2zM199 403h2v2h-2zM176 477h2v2h-2zM181 16h2v2h-2zM529 263h2v2h-2zM245 518h2v2h-2zM50 556h2v2h-2zM41 258h2v2h-2zM39 167h2v2h-2zM269 565h2v2h-2zM151 528h2v2h-2zM225 281h2v2h-2zM650 504h2v2h-2zM198 505h2v2h-2zM128 414h2v2h-2zM243 157h2v2h-2zM237 573h2v2h-2zM20 295h2v2h-2zM552 293h2v2h-2zM474 414h2v2h-2zM137 527h2v2h-2zM537 151h2v2h-2zM544 97h2v2h-2zM434 640h2v2h-2zM626 442h2v2h-2zM185 285h2v2h-2zM66 663h2v2h-2zM10 115h2v2h-2zM546 25h2v2h-2zM381 319h2v2h-2zM354 673h2v2h-2zM179 385h2v2h-2zM521 583h2v2h-2zM514 591h2v2h-2zM118 345h2v2h-2zM638 409h2v2h-2zM643 517h2v2h-2zM656 176h2v2h-2zM481 233h2v2h-2zM187 321h2v2h-2zM158 224h2v2h-2zM209 390h2v2h-2zM52 558h2v2h-2zM580 592h2v2h-2zM268 26h2v2h-2zM356 292h2v2h-2zM325 627h2v2h-2zM7 156h2v2h-2zM422 536h2v2h-2zM335 400h2v2h-2zM329 373h2v2h-2zM101 560h2v2h-2zM98 11h2v2h-2zM335 53h2v2h-2zM26 621h2v2h-2zM566 115h2v2h-2zM434 317h2v2h-2zM166 463h2v2h-2zM530 186h2v2h-2zM333 589h2v2h-2zM246 154h2v2h-2zM337 227h2v2h-2zM265 433h2v2h-2zM77 633h2v2h-2zM274 371h2v2h-2zM65 423h2v2h-2zM581 4h2v2h-2zM586 30h2v2h-2zM90 169h2v2h-2zM209 545h2v2h-2zM479 244h2v2h-2zM363 127h2v2h-2zM62 593h2v2h-2zM601 26h2v2h-2zM620 402h2v2h-2zM650 262h2v2h-2zM21 3h2v2h-2zM274 44h2v2h-2zM222 461h2v2h-2zM239 321h2v2h-2zM421 210h2v2h-2zM504 217h2v2h-2zM161 529h2v2h-2zM435 669h2v2h-2zM277 83h2v2h-2zM366 81h2v2h-2zM206 525h2v2h-2zM577 550h2v2h-2zM178 577h2v2h-2zM291 246h2v2h-2zM48 615h2v2h-2zM433 252h2v2h-2zM479 235h2v2h-2zM216 430h2v2h-2zM489 162h2v2h-2zM3 330h2v2h-2zM513 409h2v2h-2zM660 328h2v2h-2zM204 430h2v2h-2zM10 95h2v2h-2zM27 545h2v2h-2zM651 327h2v2h-2zM85 572h2v2h-2zM244 9h2v2h-2zM635 532h2v2h-2zM583 496h2v2h-2zM558 664h2v2h-2zM254 515h2v2h-2zM269 171h2v2h-2zM590 663h2v2h-2zM72 667h2v2h-2zM149 633h2v2h-2zM417 254h2v2h-2zM656 321h2v2h-2zM630 290h2v2h-2zM150 572h2v2h-2zM359 377h2v2h-2zM537 34h2v2h-2zM299 285h2v2h-2zM321 61h2v2h-2zM267 357h2v2h-2zM354 223h2v2h-2zM145 660h2v2h-2zM205 649h2v2h-2zM135 291h2v2h-2zM408 486h2v2h-2zM530 597h2v2h-2zM583 328h2v2h-2zM615 368h2v2h-2zM242 191h2v2h-2zM415 421h2v2h-2zM233 607h2v2h-2zM251 606h2v2h-2zM71 227h2v2h-2zM48 150h2v2h-2zM167 11h2v2h-2zM627 401h2v2h-2zM27 191h2v2h-2zM104 299h2v2h-2zM565 156h2v2h-2zM220 249h2v2h-2zM269 314h2v2h-2zM312 99h2v2h-2zM457 182h2v2h-2zM485 414h2v2h-2zM221 104h2v2h-2zM35 260h2v2h-2zM609 179h2v2h-2zM201 347h2v2h-2zM153 176h2v2h-2zM650 645h2v2h-2zM399 398h2v2h-2zM240 468h2v2h-2zM130 42h2v2h-2zM384 322h2v2h-2zM456 492h2v2h-2zM99 171h2v2h-2zM330 680h2v2h-2zM390 202h2v2h-2zM269 241h2v2h-2zM329 571h2v2h-2zM445 117h2v2h-2zM268 173h2v2h-2zM344 44h2v2h-2zM191 495h2v2h-2zM392 315h2v2h-2zM24 635h2v2h-2zM110 182h2v2h-2zM205 648h2v2h-2zM496 196h2v2h-2zM26 551h2v2h-2zM371 473h2v2h-2zM246 436h2v2h-2zM14 588h2v2h-2zM188 1h2v2h-2zM85 84h2v2h-2zM622 657h2v2h-2zM93 633h2v2h-2zM6 264h2v2h-2zM88 80h2v2h-2zM654 216h2v2h-2zM305 520h2v2h-2zM12 68h2v2h-2zM301 551h2v2h-2zM150 642h2v2h-2zM289 361h2v2h-2zM456 296h2v2h-2zM82 204h2v2h-2zM459 491h2v2h-2zM461 496h2v2h-2zM594 209h2v2h-2zM177 622h2v2h-2zM211 152h2v2h-2zM246 593h2v2h-2zM268 626h2v2h-2zM563 584h2v2h-2zM613 439h2v2h-2zM368 160h2v2h-2zM79 391h2v2h-2zM70 175h2v2h-2zM410 464h2v2h-2zM344 326h2v2h-2zM394 633h2v2h-2zM121 133h2v2h-2zM15 429h2v2h-2zM183 242h2v2h-2zM379 19h2v2h-2zM310 82h2v2h-2zM262 353h2v2h-2zM611 522h2v2h-2zM616 75h2v2h-2zM289 545h2v2h-2zM657 514h2v2h-2zM202 190h2v2h-2zM270 466h2v2h-2zM613 655h2v2h-2zM468 51h2v2h-2zM339 467h2v2h-2zM169 397h2v2h-2zM537 443h2v2h-2zM457 594h2v2h-2zM74 246h2v2h-2zM240 24h2v2h-2zM38 599h2v2h-2zM206 314h2v2h-2zM590 439h2v2h-2zM49 267h2v2h-2zM489 416h2v2h-2zM256 68h2v2h-2zM0 315h2v2h-2zM598 253h2v2h-2zM133 227h2v2h-2zM481 290h2v2h-2zM402 448h2v2h-2zM32 203h2v2h-2zM89 314h2v2h-2zM444 590h2v2h-2zM130 626h2v2h-2zM296 268h2v2h-2zM259 345h2v2h-2zM345 124h2v2h-2zM389 389h2v2h-2zM628 212h2v2h-2zM171 634h2v2h-2zM301 101h2v2h-2zM272 94h2v2h-2zM211 251h2v2h-2zM648 428h2v2h-2zM67 161h2v2h-2zM85 120h2v2h-2zM209 543h2v2h-2zM55 599h2v2h-2zM101 92h2v2h-2zM360 610h2v2h-2zM130 171h2v2h-2zM383 640h2v2h-2zM474 431h2v2h-2zM214 491h2v2h-2zM272 189h2v2h-2zM300 202h2v2h-2zM372 133h2v2h-2zM615 626h2v2h-2zM476 160h2v2h-2zM375 17h2v2h-2zM489 314h2v2h-2zM432 600h2v2h-2zM451 10h2v2h-2zM410 534h2v2h-2zM93 536h2v2h-2zM346 10h2v2h-2zM419 537h2v2h-2zM307 635h2v2h-2zM150 487h2v2h-2zM207 67h2v2h-2zM335 604h2v2h-2zM505 546h2v2h-2zM348 94h2v2h-2zM648 137h2v2h-2zM407 640h2v2h-2zM651 563h2v2h-2zM645 101h2v2h-2zM581 544h2v2h-2zM123 260h2v2h-2zM360 198h2v2h-2zM437 168h2v2h-2zM78 655h2v2h-2zM378 111h2v2h-2zM517 285h2v2h-2zM187 643h2v2h-2zM172 172h2v2h-2zM282 513h2v2h-2zM60 296h2v2h-2zM71 143h2v2h-2zM454 512h2v2h-2zM347 313h2v2h-2zM179 289h2v2h-2zM644 170h2v2h-2zM399 479h2v2h-2zM400 301h2v2h-2zM538 266h2v2h-2zM162 135h2v2h-2zM553 55h2v2h-2zM35 354h2v2h-2zM575 460h2v2h-2zM230 472h2v2h-2zM160 41h2v2h-2zM619 548h2v2h-2zM349 293h2v2h-2zM104 429h2v2h-2zM115 683h2v2h-2zM285 27h2v2h-2zM449 49h2v2h-2zM66 376h2v2h-2zM518 622h2v2h-2zM419 147h2v2h-2zM505 624h2v2h-2zM423 519h2v2h-2zM449 215h2v2h-2zM63 238h2v2h-2zM230 271h2v2h-2zM118 537h2v2h-2zM51 51h2v2h-2zM317 47h2v2h-2zM175 412h2v2h-2zM145 388h2v2h-2zM505 450h2v2h-2zM427 62h2v2h-2zM593 650h2v2h-2zM159 28h2v2h-2zM614 538h2v2h-2z"/></g><defs><radialGradient id="gw"><stop offset="0" stop-color="#FFF"/><stop offset="0.4" stop-color="#EEE"/><stop offset="1" stop-color="#000" stop-opacity="0"/></radialGradient><radialGradient id="gb"><stop offset="0" stop-color="#FFE8C8"/><stop offset="0.35" stop-color="#D8B080"/><stop offset="1" stop-color="#402000" stop-opacity="0"/></radialGradient><radialGradient id="gy"><stop offset="0" stop-color="#FFFFF0"/><stop offset="0.35" stop-color="#C8C0A8"/><stop offset="1" stop-color="#302818" stop-opacity="0"/></radialGradient><radialGradient id="gg"><stop offset="0" stop-color="#FFF"/><stop offset="0.35" stop-color="#A8B0B8"/><stop offset="1" stop-color="#202830" stop-opacity="0"/></radialGradient><radialGradient id="gr" cx="0.45" cy="0.4"><stop offset="0" stop-color="#F0F4F8"/><stop offset="0.6" stop-color="#8090A0"/><stop offset="1" stop-color="#405060"/></radialGradient></defs><circle cx="212" cy="103" r="9" fill="url(#gb)"/><circle cx="157" cy="76" r="5" fill="url(#gb)"/><circle cx="159" cy="246" r="6" fill="url(#gw)"/><circle cx="178" cy="183" r="4" fill="url(#gw)"/><circle cx="203" cy="25" r="3" fill="url(#gw)"/><circle cx="111" cy="139" r="3" fill="url(#gw)"/><circle cx="203" cy="208" r="3" fill="url(#gw)"/><circle cx="177" cy="210" r="3" fill="url(#gw)"/><circle cx="139" cy="288" r="3" fill="url(#gw)"/><circle cx="391" cy="6" r="4" fill="url(#gw)"/><circle cx="653" cy="24" r="4" fill="url(#gw)"/><circle cx="643" cy="50" r="4" fill="url(#gw)"/><circle cx="514" cy="47" r="3" fill="url(#gw)"/><circle cx="370" cy="151" r="8" fill="url(#gy)"/><circle cx="622" cy="136" r="5" fill="url(#gg)"/><circle cx="528" cy="225" r="6" fill="url(#gg)"/><circle cx="498" cy="194" r="4" fill="url(#gb)"/><circle cx="596" cy="118" r="6" fill="url(#gb)"/><circle cx="36" cy="415" r="5" fill="url(#gb)"/><circle cx="92" cy="410" r="5" fill="url(#gb)"/><circle cx="45" cy="494" r="6" fill="url(#gg)"/><circle cx="96" cy="473" r="4" fill="url(#gw)"/><circle cx="301" cy="477" r="4" fill="url(#gb)"/><circle cx="122" cy="595" r="6" fill="url(#gb)"/><circle cx="199" cy="571" r="4" fill="url(#gw)"/><circle cx="260" cy="368" r="6" fill="url(#gg)"/><circle cx="297" cy="367" r="4" fill="url(#gw)"/><circle cx="118" cy="678" r="4" fill="url(#gg)"/><circle cx="400" cy="349" r="4" fill="url(#gg)"/><circle cx="409" cy="381" r="4" fill="url(#gg)"/><circle cx="563" cy="468" r="4" fill="url(#gw)"/><circle cx="526" cy="433" r="3" fill="url(#gb)"/><circle cx="491" cy="586" r="11" fill="url(#gb)"/><circle cx="438" cy="638" r="7" fill="url(#gb)"/><circle cx="628" cy="597" r="6" fill="url(#gg)"/><circle cx="608" cy="373" r="7" fill="url(#gg)"/><circle cx="371" cy="317" r="5" fill="url(#gb)"/><rect x="26" y="52" width="5" height="138" fill="#6A1818"/><path d="M20 42V32A8.5 8.5 0 0 1 37 32V42Z" fill="#7A2424"/><path d="M23 33H34M28.5 27V39" stroke="#2A0A0A" stroke-width="1.6"/><ellipse cx="28.5" cy="50.5" rx="8.5" ry="4.2" fill="#8A0A0A"/><path d="M20 188V197A8.5 8.5 0 0 0 37 197V188Z" fill="#7A2424"/><path d="M23 196H34" stroke="#2A0A0A" stroke-width="1.6"/><ellipse cx="35" cy="8" rx="5.2" ry="2.8" fill="#FF1010"/><ellipse cx="295" cy="0" rx="5.2" ry="2.8" fill="#FF1010"/><ellipse cx="295" cy="5" rx="5.2" ry="2.8" fill="#FF1010"/><ellipse cx="290" cy="19" rx="5.2" ry="2.8" fill="#FF1010"/><ellipse cx="249" cy="63" rx="5.2" ry="2.8" fill="#FF1010"/><ellipse cx="87" cy="72" rx="5.2" ry="2.8" fill="#FF1010"/><ellipse cx="49" cy="76" rx="5.2" ry="2.8" fill="#FF1010"/><ellipse cx="26" cy="76" rx="5.2" ry="2.8" fill="#FF1010"/><ellipse cx="43" cy="97" rx="5.2" ry="2.8" fill="#FF1010"/><ellipse cx="58" cy="96" rx="5.2" ry="2.8" fill="#FF1010"/><ellipse cx="50" cy="139" rx="5.2" ry="2.8" fill="#FF1010"/><ellipse cx="56" cy="156" rx="5.2" ry="2.8" fill="#FF1010"/><ellipse cx="102" cy="154" rx="5.2" ry="2.8" fill="#FF1010"/><ellipse cx="11" cy="166" rx="5.2" ry="2.8" fill="#FF1010"/><ellipse cx="158" cy="161" rx="5.2" ry="2.8" fill="#FF1010"/><ellipse cx="150" cy="168" rx="5.2" ry="2.8" fill="#FF1010"/><ellipse cx="141" cy="177" rx="5.2" ry="2.8" fill="#FF1010"/><ellipse cx="195" cy="173" rx="5.2" ry="2.8" fill="#FF1010"/><ellipse cx="269" cy="154" rx="5.2" ry="2.8" fill="#FF1010"/><ellipse cx="3" cy="184" rx="5.2" ry="2.8" fill="#FF1010"/><ellipse cx="3" cy="188" rx="5.2" ry="2.8" fill="#FF1010"/><ellipse cx="51" cy="207" rx="5.2" ry="2.8" fill="#FF1010"/><ellipse cx="116" cy="218" rx="5.2" ry="2.8" fill="#FF1010"/><ellipse cx="2" cy="218" rx="5.2" ry="2.8" fill="#FF1010"/><ellipse cx="214" cy="243" rx="5.2" ry="2.8" fill="#FF1010"/><ellipse cx="213" cy="252" rx="5.2" ry="2.8" fill="#FF1010"/><ellipse cx="272" cy="250" rx="5.2" ry="2.8" fill="#FF1010"/><ellipse cx="55" cy="252" rx="5.2" ry="2.8" fill="#FF1010"/><ellipse cx="6" cy="295" rx="5.2" ry="2.8" fill="#FF1010"/><ellipse cx="64" cy="303" rx="5.2" ry="2.8" fill="#FF1010"/><ellipse cx="57" cy="331" rx="5.2" ry="2.8" fill="#FF1010"/><ellipse cx="278" cy="344" rx="5.2" ry="2.8" fill="#FF1010"/><ellipse cx="528" cy="11" rx="5.2" ry="2.8" fill="#FF1010"/><ellipse cx="519" cy="20" rx="5.2" ry="2.8" fill="#FF1010"/><ellipse cx="522" cy="28" rx="5.2" ry="2.8" fill="#FF1010"/><ellipse cx="554" cy="24" rx="5.2" ry="2.8" fill="#FF1010"/><ellipse cx="611" cy="14" rx="5.2" ry="2.8" fill="#FF1010"/><ellipse cx="610" cy="39" rx="5.2" ry="2.8" fill="#FF1010"/><ellipse cx="433" cy="40" rx="5.2" ry="2.8" fill="#FF1010"/><ellipse cx="519" cy="58" rx="5.2" ry="2.8" fill="#FF1010"/><ellipse cx="537" cy="57" rx="5.2" ry="2.8" fill="#FF1010"/><ellipse cx="514" cy="70" rx="5.2" ry="2.8" fill="#FF1010"/><ellipse cx="537" cy="71" rx="5.2" ry="2.8" fill="#FF1010"/><ellipse cx="513" cy="77" rx="5.2" ry="2.8" fill="#FF1010"/><ellipse cx="570" cy="70" rx="5.2" ry="2.8" fill="#FF1010"/><ellipse cx="659" cy="74" rx="5.2" ry="2.8" fill="#FF1010"/><ellipse cx="528" cy="102" rx="5.2" ry="2.8" fill="#FF1010"/><ellipse cx="537" cy="104" rx="5.2" ry="2.8" fill="#FF1010"/><ellipse cx="664" cy="106" rx="5.2" ry="2.8" fill="#FF1010"/><ellipse cx="663" cy="120" rx="5.2" ry="2.8" fill="#FF1010"/><ellipse cx="488" cy="147" rx="5.2" ry="2.8" fill="#FF1010"/><ellipse cx="458" cy="168" rx="5.2" ry="2.8" fill="#FF1010"/><ellipse cx="486" cy="168" rx="5.2" ry="2.8" fill="#FF1010"/><ellipse cx="419" cy="187" rx="5.2" ry="2.8" fill="#FF1010"/><ellipse cx="551" cy="178" rx="5.2" ry="2.8" fill="#FF1010"/><ellipse cx="627" cy="183" rx="5.2" ry="2.8" fill="#FF1010"/><ellipse cx="648" cy="176" rx="5.2" ry="2.8" fill="#FF1010"/><ellipse cx="552" cy="202" rx="5.2" ry="2.8" fill="#FF1010"/><ellipse cx="533" cy="214" rx="5.2" ry="2.8" fill="#FF1010"/><ellipse cx="461" cy="238" rx="5.2" ry="2.8" fill="#FF1010"/><ellipse cx="444" cy="249" rx="5.2" ry="2.8" fill="#FF1010"/><ellipse cx="467" cy="255" rx="5.2" ry="2.8" fill="#FF1010"/><ellipse cx="511" cy="242" rx="5.2" ry="2.8" fill="#FF1010"/><ellipse cx="321" cy="242" rx="5.2" ry="2.8" fill="#FF1010"/><ellipse cx="649" cy="305" rx="5.2" ry="2.8" fill="#FF1010"/><ellipse cx="638" cy="309" rx="5.2" ry="2.8" fill="#FF1010"/><ellipse cx="630" cy="313" rx="5.2" ry="2.8" fill="#FF1010"/><ellipse cx="586" cy="337" rx="5.2" ry="2.8" fill="#FF1010"/><ellipse cx="422" cy="337" rx="5.2" ry="2.8" fill="#FF1010"/><ellipse cx="79" cy="407" rx="5.2" ry="2.8" fill="#FF1010"/><ellipse cx="148" cy="484" rx="5.2" ry="2.8" fill="#FF1010"/><ellipse cx="256" cy="480" rx="5.2" ry="2.8" fill="#FF1010"/><ellipse cx="291" cy="566" rx="5.2" ry="2.8" fill="#FF1010"/><ellipse cx="55" cy="666" rx="5.2" ry="2.8" fill="#FF1010"/><ellipse cx="79" cy="665" rx="5.2" ry="2.8" fill="#FF1010"/><ellipse cx="1" cy="592" rx="5.2" ry="2.8" fill="#FF1010"/><ellipse cx="568" cy="361" rx="5.2" ry="2.8" fill="#FF1010"/><ellipse cx="524" cy="370" rx="5.2" ry="2.8" fill="#FF1010"/><ellipse cx="649" cy="361" rx="5.2" ry="2.8" fill="#FF1010"/><ellipse cx="455" cy="373" rx="5.2" ry="2.8" fill="#FF1010"/><ellipse cx="344" cy="397" rx="5.2" ry="2.8" fill="#FF1010"/><ellipse cx="434" cy="456" rx="5.2" ry="2.8" fill="#FF1010"/><ellipse cx="444" cy="485" rx="5.2" ry="2.8" fill="#FF1010"/><ellipse cx="643" cy="488" rx="5.2" ry="2.8" fill="#FF1010"/><ellipse cx="508" cy="538" rx="5.2" ry="2.8" fill="#FF1010"/><ellipse cx="596" cy="531" rx="5.2" ry="2.8" fill="#FF1010"/><ellipse cx="558" cy="549" rx="5.2" ry="2.8" fill="#FF1010"/><ellipse cx="583" cy="545" rx="5.2" ry="2.8" fill="#FF1010"/><ellipse cx="391" cy="605" rx="5.2" ry="2.8" fill="#FF1010"/><ellipse cx="387" cy="617" rx="5.2" ry="2.8" fill="#FF1010"/><ellipse cx="463" cy="655" rx="5.2" ry="2.8" fill="#FF1010"/><g transform="translate(332,241)" fill="#FF1818"><circle r="2.2"/><path d="M-1.2 -1.2Q-2.8 -3.6 -5 -4.8Q-0.6 -5.8 2.2 -1Z" transform="rotate(0)"/><path d="M-1.2 -1.2Q-2.8 -3.6 -5 -4.8Q-0.6 -5.8 2.2 -1Z" transform="rotate(90)"/><path d="M-1.2 -1.2Q-2.8 -3.6 -5 -4.8Q-0.6 -5.8 2.2 -1Z" transform="rotate(180)"/><path d="M-1.2 -1.2Q-2.8 -3.6 -5 -4.8Q-0.6 -5.8 2.2 -1Z" transform="rotate(270)"/></g><g transform="translate(344,279)" fill="#FF1818"><circle r="2.2"/><path d="M-1.2 -1.2Q-2.8 -3.6 -5 -4.8Q-0.6 -5.8 2.2 -1Z" transform="rotate(0)"/><path d="M-1.2 -1.2Q-2.8 -3.6 -5 -4.8Q-0.6 -5.8 2.2 -1Z" transform="rotate(90)"/><path d="M-1.2 -1.2Q-2.8 -3.6 -5 -4.8Q-0.6 -5.8 2.2 -1Z" transform="rotate(180)"/><path d="M-1.2 -1.2Q-2.8 -3.6 -5 -4.8Q-0.6 -5.8 2.2 -1Z" transform="rotate(270)"/></g><g transform="translate(502,291)" fill="#FF1818"><circle r="2.2"/><path d="M-1.2 -1.2Q-2.8 -3.6 -5 -4.8Q-0.6 -5.8 2.2 -1Z" transform="rotate(0)"/><path d="M-1.2 -1.2Q-2.8 -3.6 -5 -4.8Q-0.6 -5.8 2.2 -1Z" transform="rotate(90)"/><path d="M-1.2 -1.2Q-2.8 -3.6 -5 -4.8Q-0.6 -5.8 2.2 -1Z" transform="rotate(180)"/><path d="M-1.2 -1.2Q-2.8 -3.6 -5 -4.8Q-0.6 -5.8 2.2 -1Z" transform="rotate(270)"/></g><g transform="translate(407,580.5)" fill="#FF1818"><circle r="2.2"/><path d="M-1.2 -1.2Q-2.8 -3.6 -5 -4.8Q-0.6 -5.8 2.2 -1Z" transform="rotate(0)"/><path d="M-1.2 -1.2Q-2.8 -3.6 -5 -4.8Q-0.6 -5.8 2.2 -1Z" transform="rotate(90)"/><path d="M-1.2 -1.2Q-2.8 -3.6 -5 -4.8Q-0.6 -5.8 2.2 -1Z" transform="rotate(180)"/><path d="M-1.2 -1.2Q-2.8 -3.6 -5 -4.8Q-0.6 -5.8 2.2 -1Z" transform="rotate(270)"/></g><g transform="translate(480,588)" fill="#FF1818"><circle r="2.2"/><path d="M-1.2 -1.2Q-2.8 -3.6 -5 -4.8Q-0.6 -5.8 2.2 -1Z" transform="rotate(0)"/><path d="M-1.2 -1.2Q-2.8 -3.6 -5 -4.8Q-0.6 -5.8 2.2 -1Z" transform="rotate(90)"/><path d="M-1.2 -1.2Q-2.8 -3.6 -5 -4.8Q-0.6 -5.8 2.2 -1Z" transform="rotate(180)"/><path d="M-1.2 -1.2Q-2.8 -3.6 -5 -4.8Q-0.6 -5.8 2.2 -1Z" transform="rotate(270)"/></g><g transform="translate(598,117)" fill="#FF1818"><circle r="2.2"/><path d="M-1.2 -1.2Q-2.8 -3.6 -5 -4.8Q-0.6 -5.8 2.2 -1Z" transform="rotate(0)"/><path d="M-1.2 -1.2Q-2.8 -3.6 -5 -4.8Q-0.6 -5.8 2.2 -1Z" transform="rotate(90)"/><path d="M-1.2 -1.2Q-2.8 -3.6 -5 -4.8Q-0.6 -5.8 2.2 -1Z" transform="rotate(180)"/><path d="M-1.2 -1.2Q-2.8 -3.6 -5 -4.8Q-0.6 -5.8 2.2 -1Z" transform="rotate(270)"/></g><circle cx="475" cy="333" r="14" fill="url(#gr)" stroke="#F8F0F0" stroke-width="3"/><g stroke="#8C18E0" fill="none"><circle cx="332" cy="341" r="108.5" stroke-width="1.5"/><circle cx="332" cy="343" r="82" stroke-width="1.5"/><rect x="276" y="285" width="113" height="112" stroke-width="2"/><rect x="314" y="233.5" width="37" height="27" stroke-width="2"/><rect x="314" y="421.5" width="37" height="27" stroke-width="2"/></g><text x="76" y="420.5" font-family="Liberation Sans" font-size="11.5" fill="#B424F4" textLength="515" lengthAdjust="spacing">Rancho Hidalgo East Takahashi TOA-130S 5.1" f/7.7 Ortho-APO + SBIG ST-4000XCM + ST-237</text><text x="75" y="431" font-family="Liberation Sans" font-size="11.5" fill="#B424F4" textLength="518" lengthAdjust="spacing">Rancho Hidalgo West Takahashi TOA-130S 5.1" f/7.7 Ortho-APO + SBIG ST-4000XCM + ST-237</text><text x="605.5" y="330" font-family="Liberation Serif" font-size="40" fill="#E81818">A</text><circle cx="508" cy="659" r="11.7" stroke="#FF1010" stroke-width="2.2" fill="none"/><circle cx="508" cy="659" r="6.8" stroke="#FF1010" stroke-width="3" fill="none"/><text x="529" y="664" font-family="Liberation Sans" font-size="12" fill="#E8E458" textLength="101" lengthAdjust="spacingAndGlyphs">UCAC3 199:12069</text><rect x="641" y="655" width="1.3" height="9" fill="#E8E458"/></svg>
<div style="position:absolute;left:8px;top:152px;width:335px;height:705px;background:#F0F0F0;"></div>
<div style="position:absolute;left:27px;top:153px;width:1px;height:590px;background:#FCFCFC;"></div>
<div style="position:absolute;left:11px;top:156px;width:16px;height:39px;background:#F0F0F0;border-left:1px solid #FAFAFA;"></div>
<div style="position:absolute;left:12px;top:195px;width:15px;height:2px;background:#6E6E6E;"></div>
<div class="t" style="left:-41px;top:169.5px;width:120px;height:12px;line-height:12px;font-size:11px;text-align:center;transform:rotate(-90deg);">Find</div>
<div style="position:absolute;left:11px;top:197px;width:16px;height:92px;background:#F0F0F0;border-left:1px solid #FAFAFA;"></div>
<div style="position:absolute;left:12px;top:289px;width:15px;height:2px;background:#6E6E6E;"></div>
<div class="t" style="left:-41px;top:237.0px;width:120px;height:12px;line-height:12px;font-size:11px;text-align:center;transform:rotate(-90deg);">Date and Time</div>
<div style="position:absolute;left:11px;top:291px;width:16px;height:52px;background:#F0F0F0;border-left:1px solid #FAFAFA;"></div>
<div style="position:absolute;left:12px;top:343px;width:15px;height:2px;background:#6E6E6E;"></div>
<div class="t" style="left:-41px;top:311.0px;width:120px;height:12px;line-height:12px;font-size:11px;text-align:center;transform:rotate(-90deg);">Labels</div>
<div style="position:absolute;left:9px;top:344px;width:18px;height:71px;background:#F0F0F0;border-left:1px solid #FAFAFA;"></div>
<div class="t" style="left:-41px;top:373.5px;width:120px;height:12px;line-height:12px;font-size:11px;text-align:center;transform:rotate(-90deg);">Telescope</div>
<div style="position:absolute;left:11px;top:416px;width:16px;height:90px;background:#F0F0F0;border-left:1px solid #FAFAFA;"></div>
<div style="position:absolute;left:12px;top:506px;width:15px;height:2px;background:#6E6E6E;"></div>
<div class="t" style="left:-41px;top:455.0px;width:120px;height:12px;line-height:12px;font-size:11px;text-align:center;transform:rotate(-90deg);">Observing List</div>
<div style="position:absolute;left:11px;top:508px;width:16px;height:59px;background:#F0F0F0;border-left:1px solid #FAFAFA;"></div>
<div style="position:absolute;left:12px;top:567px;width:15px;height:2px;background:#6E6E6E;"></div>
<div class="t" style="left:-41px;top:531.5px;width:120px;height:12px;line-height:12px;font-size:11px;text-align:center;transform:rotate(-90deg);">Camera</div>
<div style="position:absolute;left:11px;top:569px;width:16px;height:58px;background:#F0F0F0;border-left:1px solid #FAFAFA;"></div>
<div style="position:absolute;left:12px;top:627px;width:15px;height:2px;background:#6E6E6E;"></div>
<div class="t" style="left:-41px;top:592.0px;width:120px;height:12px;line-height:12px;font-size:11px;text-align:center;transform:rotate(-90deg);">NexStar</div>
<div class="t" style="left:31px;top:157.7px;font-size:11px;line-height:11px;color:#000;font-weight:normal;">Telescope</div>
<div style="position:absolute;left:29px;top:172px;width:310px;height:1px;background:#A0A0A0;"></div>
<svg style="position:absolute;left:311px;top:157px" width="9" height="9"><path d="M3 .5H8.5V5.5H6.5M.5 3.5H5.5V8.5H.5Z M3 1.5H8M1 4.5H5" stroke="#000" fill="none" stroke-width="1"/></svg>
<svg style="position:absolute;left:326px;top:158px" width="9" height="8"><path d="M.5 .5L8 7.5M8 .5L.5 7.5" stroke="#000" stroke-width="1.4"/></svg>
<div class="t" style="left:84px;top:182.7px;font-size:11px;line-height:11px;color:#000;font-weight:normal;width:162px;letter-spacing:-0.17px;">Celestron International CGEM 800</div>
<div class="btn" style="left:254px;top:175px;width:29px;height:25px;"></div>
<svg style="position:absolute;left:259px;top:179px" width="18" height="18" viewBox="0 0 18 18"><path d="M9 1.5L10.6 1.7L11 4.1L12.6 5L14.8 3.9L16 5.3L14.7 7.3L15.1 9L17.2 10L16.8 11.8L14.4 12L13.4 13.5L14.2 15.8L12.6 16.7L11 15L9 15.4L8 17.5H6.4L6 15.1L4.4 14L2.2 15L1 13.6L2.3 11.7L2 9.9L0 9L.4 7.2L2.8 7L3.8 5.4L3 3.2L4.6 2.3L6.3 4L8 3.6Z" fill="#222" transform="translate(0.3,-0.3)"/><circle cx="9" cy="9.5" r="2.6" fill="#EEE"/></svg>
<div class="btn" style="left:65px;top:203px;width:75px;height:22px;"></div>
<div class="t" style="left:65px;top:209.7px;font-size:11px;line-height:11px;color:#000;font-weight:normal;width:61px;text-align:center;">Start Up</div>
<div class="arr" style="left:127px;top:212px"></div>
<div class="btn" style="left:146px;top:203px;width:75px;height:22px;"></div>
<div class="t" style="left:146px;top:209.7px;font-size:11px;line-height:11px;color:#000;font-weight:normal;width:61px;text-align:center;">Tools</div>
<div class="arr" style="left:208px;top:212px"></div>
<div class="btn" style="left:227px;top:203px;width:75px;height:22px;"></div>
<div class="t" style="left:227px;top:209.7px;font-size:11px;line-height:11px;color:#000;font-weight:normal;width:61px;text-align:center;">Shut Down</div>
<div class="arr" style="left:289px;top:212px"></div>
<div class="t" style="left:31px;top:229.7px;font-size:11px;line-height:11px;color:#000;font-weight:normal;">Status:</div>
<div class="t" style="left:72px;top:229.3px;font-size:11.5px;line-height:11.5px;color:#F00000;font-weight:bold;letter-spacing:0.25px;">Not Connected</div>
<div class="t" style="left:31px;top:244.7px;font-size:11px;line-height:11px;color:#000;font-weight:normal;">Target Object</div>
<div style="position:absolute;left:101px;top:250px;width:234px;height:1px;background:#A8A8A8;"></div>
<div style="position:absolute;left:101px;top:251px;width:234px;height:1px;background:#FFF;"></div>
<div class="t" style="left:42px;top:272.7px;font-size:11px;line-height:11px;color:#000;font-weight:normal;">Name:  UCAC3 199:120698</div>
<div class="btn" style="left:272px;top:267px;width:23px;height:21px;"></div>
<svg style="position:absolute;left:278px;top:271px" width="10" height="13"><path d="M8 1L2 6.5L8 12Z" fill="#D0D0D0" stroke="#B0B0B0"/></svg>
<div class="btn" style="left:301px;top:267px;width:23px;height:21px;"></div>
<svg style="position:absolute;left:308px;top:271px" width="10" height="13"><defs><linearGradient id="gnx" x1="0" x2="1"><stop offset="0" stop-color="#A0D8FF"/><stop offset="1" stop-color="#2080E0"/></linearGradient></defs><path d="M2 1L8 6.5L2 12Z" fill="url(#gnx)"/></svg>
<div class="btn" style="left:59px;top:295px;width:34px;height:46px;"></div>
<svg style="position:absolute;left:63px;top:299px" width="28" height="26" viewBox="0 0 28 26"><circle cx="13" cy="12.5" r="11" fill="none" stroke="#60E060" stroke-width="1.2"/><circle cx="13" cy="12.5" r="7.2" fill="none" stroke="#20CC20" stroke-width="3.6"/><circle cx="13" cy="12.5" r="2.8" fill="#10B010"/><path d="M19 17L25 22" stroke="#E0B020" stroke-width="2.6"/><path d="M20 18L21.5 19.2M23 20.5L24.5 21.7" stroke="#303010" stroke-width="2.6"/></svg>
<div class="t" style="left:59px;top:326.7px;font-size:11px;line-height:11px;color:#000;font-weight:normal;width:35px;text-align:center;">Slew</div>
<div class="btn" style="left:199px;top:295px;width:103px;height:46px;"></div>
<svg style="position:absolute;left:236px;top:299px" width="30" height="26" viewBox="0 0 30 26"><circle cx="13" cy="12" r="7" fill="#D0D0D0" stroke="#707070" stroke-width="2"/><path d="M13 1V23M2 12H24" stroke="#606060" stroke-width="2"/><path d="M18 17L26 24" stroke="#D0A020" stroke-width="3"/></svg>
<div class="t" style="left:199px;top:326.7px;font-size:11px;line-height:11px;color:#000;font-weight:normal;width:103px;text-align:center;">Center Cross Hairs</div>
<div class="btn" style="left:59px;top:348px;width:40px;height:46px;"></div>
<svg style="position:absolute;left:66px;top:352px" width="26" height="26" viewBox="0 0 26 26"><path d="M3 3L20 21M20 3L4 21" stroke="#909090" stroke-width="4" stroke-linecap="round"/></svg>
<div class="t" style="left:59px;top:379.7px;font-size:11px;line-height:11px;color:#8C8C8C;font-weight:normal;width:40px;text-align:center;">Abort</div>
<div class="btn" style="left:105px;top:348px;width:87px;height:46px;"></div>
<svg style="position:absolute;left:136px;top:352px" width="28" height="26" viewBox="0 0 28 26"><path d="M3 2H15L19 6V24H3Z" fill="#F0F4FA" stroke="#90A0B8"/><circle cx="10" cy="15" r="4" fill="#E03030"/><circle cx="10" cy="15" r="1.5" fill="#FFF"/><path d="M16 16L24 24" stroke="#D0A020" stroke-width="3"/></svg>
<div class="t" style="left:105px;top:379.7px;font-size:11px;line-height:11px;color:#000;font-weight:normal;width:87px;text-align:center;">Set Track Rates</div>
<div class="btn" style="left:199px;top:348px;width:110px;height:46px;"></div>
<svg style="position:absolute;left:240px;top:352px" width="28" height="26" viewBox="0 0 28 26"><circle cx="12" cy="11" r="6" fill="#D8D8D8" stroke="#707070" stroke-width="2"/><circle cx="12" cy="11" r="2.5" fill="#40D040"/><path d="M12 1V21M2 11H22" stroke="#707070" stroke-width="1.5"/><circle cx="20" cy="19" r="5" fill="#50A8F0" stroke="#2070C0"/><path d="M17 19H23M20 16V22" stroke="#fff" stroke-width="1.5"/></svg>
<div class="t" style="left:199px;top:379.7px;font-size:11px;line-height:11px;color:#000;font-weight:normal;width:110px;text-align:center;">Add Pointing Sample</div>
<div class="t" style="left:78px;top:407.7px;font-size:11px;line-height:11px;color:#000;font-weight:normal;">Searc<u>h</u> for:</div>
<div style="position:absolute;left:140px;top:402px;width:86px;height:21px;background:#FFF;border:1px solid #808080;border-right-color:#E0E0E0;border-bottom-color:#E0E0E0;"></div>
<div class="btn" style="left:208px;top:404px;width:16px;height:17px;box-shadow:none;"></div>
<div class="arr" style="left:213px;top:411px;border-left-width:4px;border-right-width:4px;border-top-width:4px;"></div>
<div class="btn" style="left:234px;top:401px;width:89px;height:22px;"></div>
<div class="t" style="left:234px;top:407.7px;font-size:11px;line-height:11px;color:#000;font-weight:normal;width:89px;text-align:center;"><u>F</u>ind</div>
<div style="position:absolute;left:33px;top:456px;width:302px;height:156px;background:#F0F0F0;border-top:1px solid #FFF;border-left:1px solid #FFF;border-right:2px solid #7A7A7A;border-bottom:2px solid #7A7A7A;"></div>
<div style="position:absolute;left:33px;top:438px;width:49px;height:19px;background:#F0F0F0;border-top:1px solid #FFF;border-left:1px solid #FFF;border-right:2px solid #7A7A7A;"></div>
<div style="position:absolute;left:82px;top:441px;width:39px;height:16px;background:#F0F0F0;border-top:1px solid #FFF;border-right:2px solid #7A7A7A;"></div>
<div class="t" style="left:33px;top:442.7px;font-size:11px;line-height:11px;color:#000;font-weight:normal;width:47px;text-align:center;">Move</div>
<div class="t" style="left:82px;top:444.7px;font-size:11px;line-height:11px;color:#000;font-weight:normal;width:38px;text-align:center;">Jog</div>
<div class="btn" style="left:169px;top:477px;width:30px;height:26px;box-shadow:none;border-right-color:#6A6A6A;border-bottom-color:#6A6A6A;"></div>
<div class="btn" style="left:139px;top:503px;width:30px;height:26px;box-shadow:none;border-right-color:#6A6A6A;border-bottom-color:#6A6A6A;"></div>
<div class="btn" style="left:199px;top:503px;width:30px;height:26px;box-shadow:none;border-right-color:#6A6A6A;border-bottom-color:#6A6A6A;"></div>
<div class="btn" style="left:169px;top:528px;width:30px;height:26px;box-shadow:none;border-right-color:#6A6A6A;border-bottom-color:#6A6A6A;"></div>
<div style="position:absolute;left:168px;top:502px;width:31px;height:27px;background:#F0F0F0;border:1px solid #FFF;border-top-color:#6A6A6A;border-left-color:#6A6A6A;border-right-color:#6A6A6A;border-bottom-color:#6A6A6A;"></div>
<svg style="position:absolute;left:177px;top:480px" width="14" height="20"><defs><linearGradient id="gdp" x1="0" x2="0" y1="0" y2="1"><stop offset="0" stop-color="#A8F060"/><stop offset="1" stop-color="#40B800"/></linearGradient></defs><path d="M7 1Q11 8 11 15Q7 18 3 15Q3 8 7 1Z" fill="url(#gdp)"/></svg>
<svg style="position:absolute;left:177px;top:531px" width="14" height="20"><path d="M7 19Q11 12 11 5Q7 2 3 5Q3 12 7 19Z" fill="url(#gdp)"/></svg>
<svg style="position:absolute;left:145px;top:509px" width="20" height="14"><defs><linearGradient id="gdl" x1="0" x2="0" y1="0" y2="1"><stop offset="0" stop-color="#A8F060"/><stop offset="1" stop-color="#40B800"/></linearGradient></defs><path d="M1 7Q8 3 15 3Q18 7 15 11Q8 11 1 7Z" fill="url(#gdl)"/></svg>
<svg style="position:absolute;left:204px;top:509px" width="20" height="14"><path d="M19 7Q12 3 5 3Q2 7 5 11Q12 11 19 7Z" fill="url(#gdl)"/></svg>
<svg style="position:absolute;left:175px;top:508px" width="18" height="16"><path d="M3 3Q6 4 9 8Q12 13 16 14M15 2Q10 6 8 9Q5 13 2 14" stroke="#C01010" stroke-width="2.4" fill="none" stroke-linecap="round"/></svg>
<div class="t" style="left:110px;top:573.7px;font-size:11px;line-height:11px;color:#000;font-weight:normal;">R<u>a</u>te:</div>
<div style="position:absolute;left:138px;top:570px;width:116px;height:18px;background:#FFF;border:1px solid #808080;border-right-color:#E0E0E0;border-bottom-color:#E0E0E0;"></div>
<div class="t" style="left:141px;top:573.7px;font-size:11px;line-height:11px;color:#000;font-weight:normal;">3 degrees/second</div>
<div class="btn" style="left:237px;top:572px;width:15px;height:14px;box-shadow:none;"></div>
<div class="arr" style="left:241px;top:577px;border-left-width:4px;border-right-width:4px;border-top-width:4px;"></div>
<div class="btn" style="left:146px;top:614px;width:75px;height:22px;"></div>
<div class="t" style="left:146px;top:620.7px;font-size:11px;line-height:11px;color:#000;font-weight:normal;width:62px;text-align:center;"><u>O</u>rientation</div>
<div class="arr" style="left:209px;top:623px"></div>
<div style="position:absolute;left:32px;top:639px;width:303px;height:1px;background:#A8A8A8;"></div>
<div style="position:absolute;left:32px;top:640px;width:303px;height:1px;background:#FFF;"></div>
<div class="t" style="left:105px;top:699.7px;font-size:11px;line-height:11px;color:#000;font-weight:normal;">TPoint: No pointing data</div>
<div style="position:absolute;left:8px;top:742px;width:335px;height:6px;background:#F0F0F0;"></div>
<div style="position:absolute;left:8px;top:740px;width:88px;height:1px;background:#FFF;"></div>
<div style="position:absolute;left:8px;top:744px;width:88px;height:2px;background:#6E6E6E;"></div>
<div style="position:absolute;left:271px;top:744px;width:64px;height:2px;background:#6E6E6E;"></div>
<div class="t" style="left:10px;top:750.7px;font-size:11px;line-height:11px;color:#000;font-weight:normal;">Chart Status</div>
<div style="position:absolute;left:8px;top:765px;width:331px;height:1px;background:#A0A0A0;"></div>
<svg style="position:absolute;left:311px;top:750px" width="9" height="9"><path d="M3 .5H8.5V5.5H6.5M.5 3.5H5.5V8.5H.5Z M3 1.5H8M1 4.5H5" stroke="#000" fill="none" stroke-width="1"/></svg>
<svg style="position:absolute;left:326px;top:751px" width="9" height="8"><path d="M.5 .5L8 7.5M8 .5L.5 7.5" stroke="#000" stroke-width="1.4"/></svg>
<div style="position:absolute;left:20px;top:777px;width:306px;height:49px;background:#FFF;border-top:1px solid #E8E8E8;border-left:1px solid #E8E8E8;border-right:2px solid #8A8A8A;border-bottom:2px solid #8A8A8A;overflow:hidden;"></div>
<div class="t" style="left:20px;top:781.8px;font-size:12px;line-height:12px;color:#000;font-weight:normal;width:117px;text-align:right;letter-spacing:-0.1px;">Location Description:</div>
<div class="t" style="left:144px;top:781.8px;font-size:12px;line-height:12px;color:#000;font-weight:normal;letter-spacing:-0.1px;">Rancho Hidalgo</div>
<div class="t" style="left:20px;top:797.8px;font-size:12px;line-height:12px;color:#000;font-weight:normal;width:117px;text-align:right;letter-spacing:-0.1px;">Date:</div>
<div class="t" style="left:144px;top:797.8px;font-size:12px;line-height:12px;color:#000;font-weight:normal;letter-spacing:-0.1px;">11/18/2015</div>
<div style="position:absolute;left:20px;top:812px;width:285px;height:12px;overflow:hidden;"><div class="t" style="left:0;top:1.8px;width:117px;text-align:right;font-size:12px;line-height:12px;letter-spacing:-0.1px">Time:</div><div class="t" style="left:124px;top:1.8px;font-size:12px;line-height:12px;letter-spacing:-0.1px">7:53:10 AM STD</div></div>
<div class="btn" style="left:307px;top:781px;width:17px;height:15px;box-shadow:none;"></div>
<div style="position:absolute;left:312px;top:787px;width:0;height:0;border-left:4px solid transparent;border-right:4px solid transparent;border-bottom:4px solid #000;"></div>
<div class="btn" style="left:307px;top:796px;width:17px;height:10px;box-shadow:none;"></div>
<div class="btn" style="left:307px;top:808px;width:17px;height:15px;box-shadow:none;"></div>
<div class="arr" style="left:312px;top:813px;border-left-width:4px;border-right-width:4px;border-top-width:4px;"></div>
<div style="position:absolute;left:282px;top:841px;width:709px;height:15px;border-top:1px solid #A0A0A0;border-left:1px solid #A0A0A0;"></div>
<svg style="position:absolute;left:0;top:0" width="1018" height="866"><text x="284.0" y="852.5" font-family="Liberation Sans" font-size="11.5" fill="#000" textLength="118.19999999999999" lengthAdjust="spacing">RA (2000):10h 12m 51s</text><text x="414.2" y="852.5" font-family="Liberation Sans" font-size="11.5" fill="#000" textLength="120.00000000000006" lengthAdjust="spacing">Dec (2000):+11° 53' 25"</text><text x="546.5" y="852.5" font-family="Liberation Sans" font-size="11.5" fill="#000" textLength="76.39999999999998" lengthAdjust="spacing">Az:224° 03' 03"</text><text x="635.9" y="852.5" font-family="Liberation Sans" font-size="11.5" fill="#000" textLength="81.30000000000007" lengthAdjust="spacing">Alt:+63° 45' 17"</text><text x="729.0" y="852.5" font-family="Liberation Sans" font-size="11.5" fill="#000" textLength="66.5" lengthAdjust="spacing">LST: 11:26:55</text><text x="807.5" y="852.5" font-family="Liberation Sans" font-size="11.5" fill="#000" textLength="78.60000000000002" lengthAdjust="spacing">Not connected</text><text x="899.0" y="852.5" font-family="Liberation Sans" font-size="11.5" fill="#000" textLength="78.20000000000005" lengthAdjust="spacing">Not connected</text></svg>
<svg style="position:absolute;left:994px;top:842px" width="14" height="14"><path d="M13 3L3 13M13 7L7 13M13 11L11 13" stroke="#B0B0B0" stroke-width="1.2"/></svg></body></html>
